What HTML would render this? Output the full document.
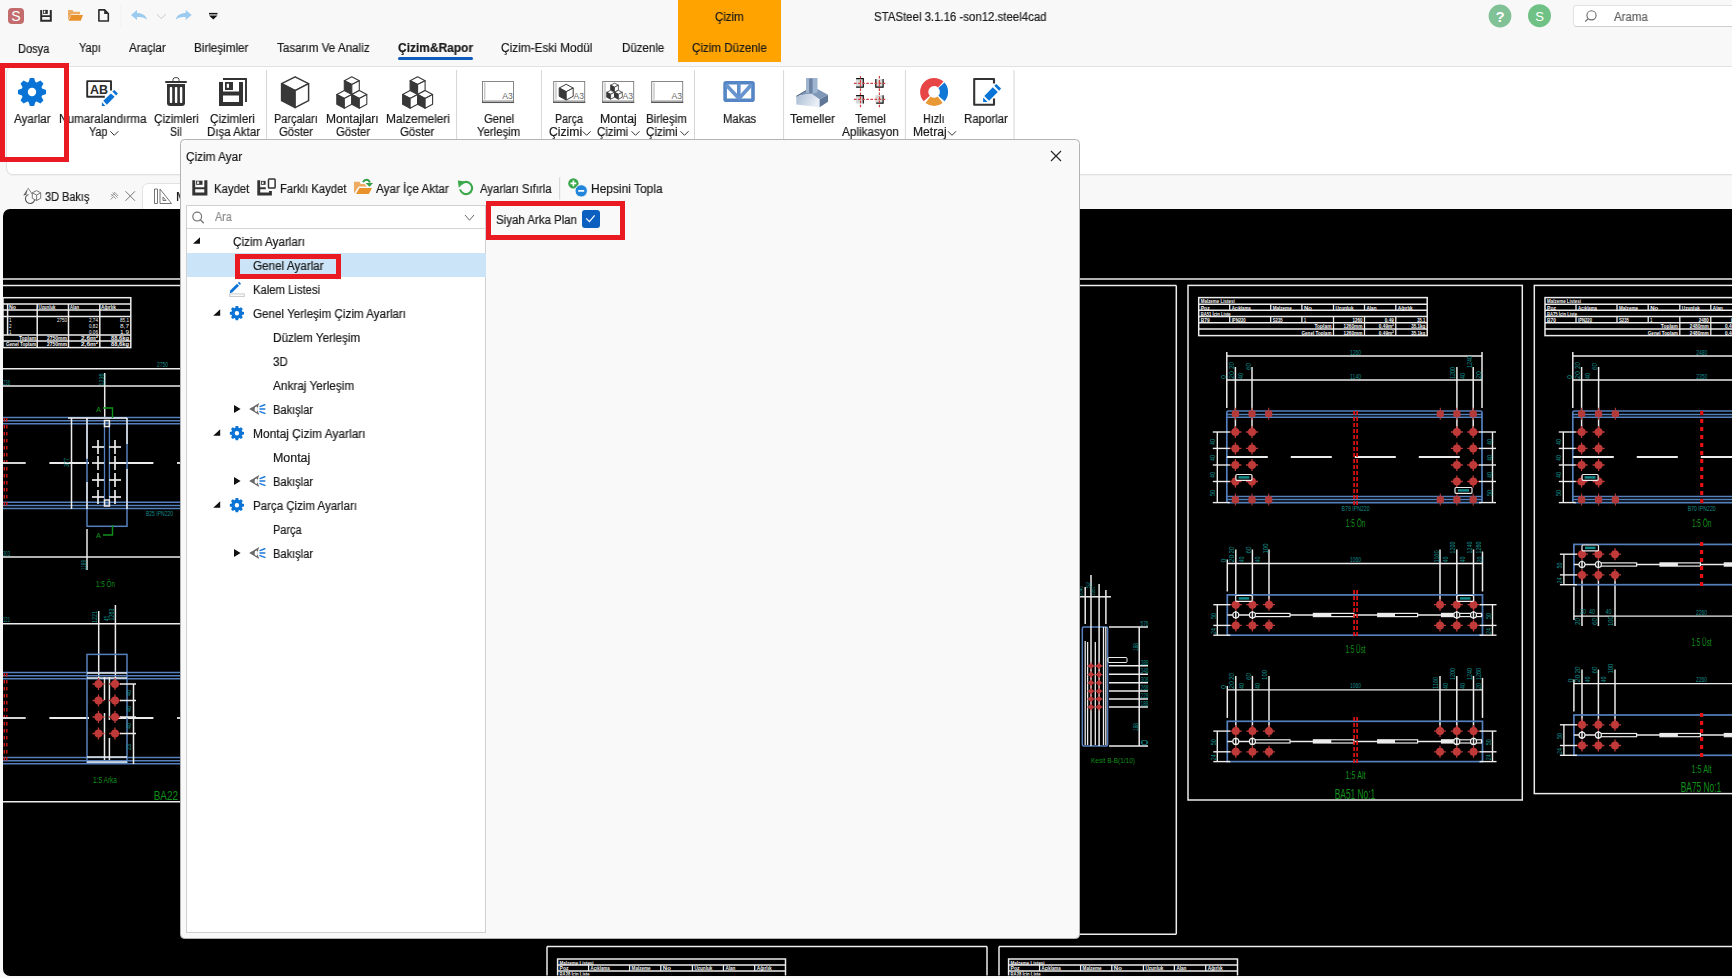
<!DOCTYPE html>
<html><head><meta charset="utf-8"><title>STASteel</title>
<style>
html,body{margin:0;padding:0;}
body{width:1732px;height:978px;overflow:hidden;position:relative;background:#f8f8f8;font-family:"Liberation Sans", sans-serif;}
.a{position:absolute;}
.t{position:absolute;white-space:pre;line-height:1;transform-origin:0 0;font-family:"Liberation Sans", sans-serif;will-change:transform;-webkit-text-stroke:0.2px currentColor;}
svg{position:absolute;overflow:visible;}
</style></head><body>

<div class="a" style="left:678px;top:0;width:103px;height:61.5px;background:#ffa300"></div>
<div class="a" style="left:398px;top:57.3px;width:75px;height:2.6px;background:#0f5cbf;border-radius:2px"></div>
<div class="a" style="left:6px;top:66px;width:1760px;height:107px;background:#fff;border:1px solid #e2e2e2;border-radius:7px;box-shadow:0 1px 1px rgba(0,0,0,0.04)"></div>
<div class="a" style="left:141.8px;top:182.8px;width:120px;height:30px;background:#fff;border:1px solid #e3e3e3;border-radius:6px 6px 0 0"></div>
<div class="a" style="left:1572.8px;top:4.7px;width:200px;height:21.9px;background:#fff;border:1px solid #e3e3e3;border-bottom-color:#cfcfcf;border-radius:4px;box-sizing:border-box"></div>

<div class="a" style="left:3px;top:209px;width:1760px;height:766.5px;background:#000;border-radius:7px"></div>
<svg class="a" style="left:0;top:0" width="1732" height="978" viewBox="0 0 1732 978">
<defs><clipPath id="cadclip"><rect x="3" y="209" width="1729" height="766.5"/></clipPath></defs><g clip-path="url(#cadclip)">
<line x1="3.00" y1="279.00" x2="1732.00" y2="279.00" stroke="#ececec" stroke-width="1.6" />
<line x1="3.00" y1="285.50" x2="1176.30" y2="285.50" stroke="#ececec" stroke-width="1.5" />
<rect x="3.00" y="297.70" width="127.80" height="49.90" rx="0" fill="none" stroke="#ececec" stroke-width="1.5"/>
<line x1="3.00" y1="304.00" x2="130.80" y2="304.00" stroke="#ececec" stroke-width="1.5" />
<line x1="3.00" y1="310.00" x2="130.80" y2="310.00" stroke="#ececec" stroke-width="1.5" />
<line x1="3.00" y1="316.60" x2="130.80" y2="316.60" stroke="#ececec" stroke-width="1.5" />
<line x1="3.00" y1="335.00" x2="130.80" y2="335.00" stroke="#ececec" stroke-width="1.5" />
<line x1="3.00" y1="341.00" x2="130.80" y2="341.00" stroke="#ececec" stroke-width="1.5" />
<line x1="37.20" y1="304.00" x2="37.20" y2="347.60" stroke="#ececec" stroke-width="1.5" />
<line x1="68.50" y1="304.00" x2="68.50" y2="347.60" stroke="#ececec" stroke-width="1.5" />
<line x1="99.80" y1="304.00" x2="99.80" y2="347.60" stroke="#ececec" stroke-width="1.5" />
<line x1="7.60" y1="304.00" x2="7.60" y2="335.00" stroke="#ececec" stroke-width="1.5" />
<text x="9.00" y="309.20" font-family="Liberation Sans" font-size="6" fill="#f4f4f4" text-anchor="start" font-weight="700" textLength="7" lengthAdjust="spacingAndGlyphs">No</text>
<text x="38.50" y="309.20" font-family="Liberation Sans" font-size="6" fill="#f4f4f4" text-anchor="start" font-weight="700" textLength="17" lengthAdjust="spacingAndGlyphs">Uzunluk</text>
<text x="70.00" y="309.20" font-family="Liberation Sans" font-size="6" fill="#f4f4f4" text-anchor="start" font-weight="700" textLength="9" lengthAdjust="spacingAndGlyphs">Alan</text>
<text x="101.00" y="309.20" font-family="Liberation Sans" font-size="6" fill="#f4f4f4" text-anchor="start" font-weight="700" textLength="15" lengthAdjust="spacingAndGlyphs">Ağırlık</text>
<text x="9.00" y="321.50" font-family="Liberation Sans" font-size="5.5" fill="#f4f4f4" text-anchor="start" textLength="2.5" lengthAdjust="spacingAndGlyphs">1</text>
<text x="98.00" y="321.50" font-family="Liberation Sans" font-size="5.5" fill="#f4f4f4" text-anchor="end" textLength="9" lengthAdjust="spacingAndGlyphs">2,74</text>
<text x="129.00" y="321.50" font-family="Liberation Sans" font-size="5.5" fill="#f4f4f4" text-anchor="end" textLength="9" lengthAdjust="spacingAndGlyphs">85,1</text>
<text x="9.00" y="327.50" font-family="Liberation Sans" font-size="5.5" fill="#f4f4f4" text-anchor="start" textLength="2.5" lengthAdjust="spacingAndGlyphs">2</text>
<text x="98.00" y="327.50" font-family="Liberation Sans" font-size="5.5" fill="#f4f4f4" text-anchor="end" textLength="9" lengthAdjust="spacingAndGlyphs">0,82</text>
<text x="129.00" y="327.50" font-family="Liberation Sans" font-size="5.5" fill="#f4f4f4" text-anchor="end" textLength="9" lengthAdjust="spacingAndGlyphs">8,7</text>
<text x="9.00" y="333.50" font-family="Liberation Sans" font-size="5.5" fill="#f4f4f4" text-anchor="start" textLength="2.5" lengthAdjust="spacingAndGlyphs">1</text>
<text x="98.00" y="333.50" font-family="Liberation Sans" font-size="5.5" fill="#f4f4f4" text-anchor="end" textLength="9" lengthAdjust="spacingAndGlyphs">0,06</text>
<text x="129.00" y="333.50" font-family="Liberation Sans" font-size="5.5" fill="#f4f4f4" text-anchor="end" textLength="9" lengthAdjust="spacingAndGlyphs">1,9</text>
<text x="67.00" y="321.50" font-family="Liberation Sans" font-size="5.5" fill="#f4f4f4" text-anchor="end" textLength="10" lengthAdjust="spacingAndGlyphs">2750</text>
<text x="36.00" y="340.20" font-family="Liberation Sans" font-size="6" fill="#f4f4f4" text-anchor="end" font-weight="700" textLength="17" lengthAdjust="spacingAndGlyphs">Toplam</text>
<text x="36.00" y="346.40" font-family="Liberation Sans" font-size="6" fill="#f4f4f4" text-anchor="end" font-weight="700" textLength="30" lengthAdjust="spacingAndGlyphs">Genel Toplam</text>
<text x="67.00" y="340.20" font-family="Liberation Sans" font-size="5.5" fill="#f4f4f4" text-anchor="end" font-weight="700" textLength="20" lengthAdjust="spacingAndGlyphs">2750mm</text>
<text x="98.00" y="340.20" font-family="Liberation Sans" font-size="5.5" fill="#f4f4f4" text-anchor="end" font-weight="700" textLength="17" lengthAdjust="spacingAndGlyphs">2,6m²</text>
<text x="129.00" y="340.20" font-family="Liberation Sans" font-size="5.5" fill="#f4f4f4" text-anchor="end" font-weight="700" textLength="18" lengthAdjust="spacingAndGlyphs">88,6kg</text>
<text x="67.00" y="346.40" font-family="Liberation Sans" font-size="5.5" fill="#f4f4f4" text-anchor="end" font-weight="700" textLength="20" lengthAdjust="spacingAndGlyphs">2750mm</text>
<text x="98.00" y="346.40" font-family="Liberation Sans" font-size="5.5" fill="#f4f4f4" text-anchor="end" font-weight="700" textLength="17" lengthAdjust="spacingAndGlyphs">2,6m²</text>
<text x="129.00" y="346.40" font-family="Liberation Sans" font-size="5.5" fill="#f4f4f4" text-anchor="end" font-weight="700" textLength="18" lengthAdjust="spacingAndGlyphs">88,6kg</text>
<line x1="3.00" y1="368.70" x2="180.00" y2="368.70" stroke="#ececec" stroke-width="1.5" />
<text x="157.00" y="367.30" font-family="Liberation Sans" font-size="7" fill="#138c8c" text-anchor="start" textLength="11" lengthAdjust="spacingAndGlyphs">2750</text>
<line x1="3.00" y1="386.00" x2="180.00" y2="386.00" stroke="#ececec" stroke-width="1.5" />
<text x="3.00" y="385.00" font-family="Liberation Sans" font-size="7" fill="#138c8c" text-anchor="start" textLength="7" lengthAdjust="spacingAndGlyphs">236</text>
<line x1="104.70" y1="373.00" x2="104.70" y2="418.00" stroke="#ececec" stroke-width="1.5" />
<text x="103.50" y="385.50" font-family="Liberation Sans" font-size="6.5" fill="#138c8c" text-anchor="start" transform="rotate(-90 103.50 385.50)" textLength="12" lengthAdjust="spacingAndGlyphs">1236</text>
<line x1="3.00" y1="417.50" x2="180.00" y2="417.50" stroke="#5580bd" stroke-width="1.5" />
<line x1="3.00" y1="420.70" x2="180.00" y2="420.70" stroke="#5580bd" stroke-width="1.5" />
<line x1="3.00" y1="423.70" x2="180.00" y2="423.70" stroke="#5580bd" stroke-width="1.5" />
<line x1="3.00" y1="502.20" x2="180.00" y2="502.20" stroke="#5580bd" stroke-width="1.5" />
<line x1="3.00" y1="505.50" x2="180.00" y2="505.50" stroke="#5580bd" stroke-width="1.5" />
<line x1="3.00" y1="508.50" x2="180.00" y2="508.50" stroke="#5580bd" stroke-width="1.5" />
<line x1="4.30" y1="418.00" x2="4.30" y2="421.50" stroke="#e01818" stroke-width="1.3" />
<line x1="6.80" y1="418.00" x2="6.80" y2="421.50" stroke="#e01818" stroke-width="1.3" />
<line x1="4.30" y1="425.00" x2="4.30" y2="428.50" stroke="#e01818" stroke-width="1.3" />
<line x1="6.80" y1="425.00" x2="6.80" y2="428.50" stroke="#e01818" stroke-width="1.3" />
<line x1="4.30" y1="432.00" x2="4.30" y2="435.50" stroke="#e01818" stroke-width="1.3" />
<line x1="6.80" y1="432.00" x2="6.80" y2="435.50" stroke="#e01818" stroke-width="1.3" />
<line x1="4.30" y1="439.00" x2="4.30" y2="442.50" stroke="#e01818" stroke-width="1.3" />
<line x1="6.80" y1="439.00" x2="6.80" y2="442.50" stroke="#e01818" stroke-width="1.3" />
<line x1="4.30" y1="446.00" x2="4.30" y2="449.50" stroke="#e01818" stroke-width="1.3" />
<line x1="6.80" y1="446.00" x2="6.80" y2="449.50" stroke="#e01818" stroke-width="1.3" />
<line x1="4.30" y1="453.00" x2="4.30" y2="456.50" stroke="#e01818" stroke-width="1.3" />
<line x1="6.80" y1="453.00" x2="6.80" y2="456.50" stroke="#e01818" stroke-width="1.3" />
<line x1="4.30" y1="460.00" x2="4.30" y2="463.50" stroke="#e01818" stroke-width="1.3" />
<line x1="6.80" y1="460.00" x2="6.80" y2="463.50" stroke="#e01818" stroke-width="1.3" />
<line x1="4.30" y1="467.00" x2="4.30" y2="470.50" stroke="#e01818" stroke-width="1.3" />
<line x1="6.80" y1="467.00" x2="6.80" y2="470.50" stroke="#e01818" stroke-width="1.3" />
<line x1="4.30" y1="474.00" x2="4.30" y2="477.50" stroke="#e01818" stroke-width="1.3" />
<line x1="6.80" y1="474.00" x2="6.80" y2="477.50" stroke="#e01818" stroke-width="1.3" />
<line x1="4.30" y1="481.00" x2="4.30" y2="484.50" stroke="#e01818" stroke-width="1.3" />
<line x1="6.80" y1="481.00" x2="6.80" y2="484.50" stroke="#e01818" stroke-width="1.3" />
<line x1="4.30" y1="488.00" x2="4.30" y2="491.50" stroke="#e01818" stroke-width="1.3" />
<line x1="6.80" y1="488.00" x2="6.80" y2="491.50" stroke="#e01818" stroke-width="1.3" />
<line x1="4.30" y1="495.00" x2="4.30" y2="498.50" stroke="#e01818" stroke-width="1.3" />
<line x1="6.80" y1="495.00" x2="6.80" y2="498.50" stroke="#e01818" stroke-width="1.3" />
<line x1="4.30" y1="502.00" x2="4.30" y2="505.50" stroke="#e01818" stroke-width="1.3" />
<line x1="6.80" y1="502.00" x2="6.80" y2="505.50" stroke="#e01818" stroke-width="1.3" />
<line x1="3.00" y1="463.00" x2="25.70" y2="463.00" stroke="#ececec" stroke-width="1.8" />
<line x1="49.40" y1="463.00" x2="89.00" y2="463.00" stroke="#ececec" stroke-width="1.8" />
<line x1="116.00" y1="463.00" x2="153.40" y2="463.00" stroke="#ececec" stroke-width="1.8" />
<line x1="177.00" y1="463.00" x2="180.00" y2="463.00" stroke="#ececec" stroke-width="1.8" />
<line x1="71.50" y1="418.00" x2="71.50" y2="509.00" stroke="#ececec" stroke-width="1.5" />
<rect x="87.00" y="418.00" width="40.00" height="108.30" rx="0" fill="none" stroke="#5580bd" stroke-width="1.5"/>
<line x1="68.00" y1="418.00" x2="127.00" y2="418.00" stroke="#ececec" stroke-width="1.5" />
<line x1="87.00" y1="418.00" x2="87.00" y2="458.70" stroke="#ececec" stroke-width="1.5" />
<line x1="87.00" y1="482.00" x2="87.00" y2="509.00" stroke="#ececec" stroke-width="1.5" />
<line x1="127.00" y1="418.00" x2="127.00" y2="444.00" stroke="#ececec" stroke-width="1.5" />
<line x1="127.00" y1="469.00" x2="127.00" y2="509.00" stroke="#ececec" stroke-width="1.5" />
<rect x="104.50" y="423.00" width="4.90" height="81.00" rx="0" fill="none" stroke="#5580bd" stroke-width="1.3"/>
<rect x="104.50" y="420.50" width="4.90" height="6.00" rx="0" fill="none" stroke="#ececec" stroke-width="1.5"/>
<rect x="104.50" y="500.00" width="4.90" height="6.00" rx="0" fill="none" stroke="#ececec" stroke-width="1.5"/>
<line x1="92.00" y1="447.00" x2="104.00" y2="447.00" stroke="#ececec" stroke-width="1.7" />
<line x1="98.00" y1="440.00" x2="98.00" y2="454.00" stroke="#ececec" stroke-width="1.7" />
<line x1="109.00" y1="447.00" x2="121.00" y2="447.00" stroke="#ececec" stroke-width="1.7" />
<line x1="115.00" y1="440.00" x2="115.00" y2="454.00" stroke="#ececec" stroke-width="1.7" />
<line x1="92.00" y1="463.00" x2="104.00" y2="463.00" stroke="#ececec" stroke-width="1.7" />
<line x1="98.00" y1="456.00" x2="98.00" y2="470.00" stroke="#ececec" stroke-width="1.7" />
<line x1="109.00" y1="463.00" x2="121.00" y2="463.00" stroke="#ececec" stroke-width="1.7" />
<line x1="115.00" y1="456.00" x2="115.00" y2="470.00" stroke="#ececec" stroke-width="1.7" />
<line x1="92.00" y1="480.00" x2="104.00" y2="480.00" stroke="#ececec" stroke-width="1.7" />
<line x1="98.00" y1="473.00" x2="98.00" y2="487.00" stroke="#ececec" stroke-width="1.7" />
<line x1="109.00" y1="480.00" x2="121.00" y2="480.00" stroke="#ececec" stroke-width="1.7" />
<line x1="115.00" y1="473.00" x2="115.00" y2="487.00" stroke="#ececec" stroke-width="1.7" />
<line x1="92.00" y1="497.00" x2="104.00" y2="497.00" stroke="#ececec" stroke-width="1.7" />
<line x1="98.00" y1="490.00" x2="98.00" y2="504.00" stroke="#ececec" stroke-width="1.7" />
<line x1="109.00" y1="497.00" x2="121.00" y2="497.00" stroke="#ececec" stroke-width="1.7" />
<line x1="115.00" y1="490.00" x2="115.00" y2="504.00" stroke="#ececec" stroke-width="1.7" />
<text x="96.00" y="412.00" font-family="Liberation Sans" font-size="7.5" fill="#12901c" text-anchor="start" textLength="5" lengthAdjust="spacingAndGlyphs">A</text>
<path d="M103,408 H112.5 V418" fill="none" stroke="#12901c" stroke-width="1.4"/>
<text x="96.00" y="538.00" font-family="Liberation Sans" font-size="7.5" fill="#12901c" text-anchor="start" textLength="5" lengthAdjust="spacingAndGlyphs">A</text>
<path d="M103,535 H112.5 V525" fill="none" stroke="#12901c" stroke-width="1.4"/>
<text x="146.00" y="516.00" font-family="Liberation Sans" font-size="7" fill="#138c8c" text-anchor="start" textLength="27" lengthAdjust="spacingAndGlyphs">B25 IPN220</text>
<text x="68.50" y="467.00" font-family="Liberation Sans" font-size="6.5" fill="#138c8c" text-anchor="start" transform="rotate(-90 68.50 467.00)" textLength="9" lengthAdjust="spacingAndGlyphs">377</text>
<line x1="3.00" y1="557.00" x2="180.00" y2="557.00" stroke="#ececec" stroke-width="1.4" />
<text x="3.00" y="556.00" font-family="Liberation Sans" font-size="7" fill="#138c8c" text-anchor="start" textLength="7" lengthAdjust="spacingAndGlyphs">303</text>
<line x1="87.00" y1="529.00" x2="87.00" y2="570.00" stroke="#ececec" stroke-width="1.5" />
<text x="85.50" y="570.00" font-family="Liberation Sans" font-size="6.5" fill="#138c8c" text-anchor="start" transform="rotate(-90 85.50 570.00)" textLength="10" lengthAdjust="spacingAndGlyphs">1189</text>
<text x="96.00" y="587.00" font-family="Liberation Sans" font-size="9" fill="#12901c" text-anchor="start" textLength="19" lengthAdjust="spacingAndGlyphs">1:5 Ön</text>
<line x1="3.00" y1="623.70" x2="180.00" y2="623.70" stroke="#ececec" stroke-width="1.4" />
<text x="3.00" y="622.00" font-family="Liberation Sans" font-size="7" fill="#138c8c" text-anchor="start" textLength="7" lengthAdjust="spacingAndGlyphs">121</text>
<line x1="98.70" y1="611.00" x2="98.70" y2="684.00" stroke="#ececec" stroke-width="1.5" />
<line x1="115.40" y1="605.00" x2="115.40" y2="684.00" stroke="#ececec" stroke-width="1.5" />
<text x="97.00" y="623.00" font-family="Liberation Sans" font-size="6.5" fill="#138c8c" text-anchor="start" transform="rotate(-90 97.00 623.00)" textLength="12" lengthAdjust="spacingAndGlyphs">1221</text>
<text x="108.50" y="621.00" font-family="Liberation Sans" font-size="6.5" fill="#138c8c" text-anchor="start" transform="rotate(-90 108.50 621.00)" textLength="5" lengthAdjust="spacingAndGlyphs">45</text>
<text x="113.70" y="620.50" font-family="Liberation Sans" font-size="6.5" fill="#138c8c" text-anchor="start" transform="rotate(-90 113.70 620.50)" textLength="12" lengthAdjust="spacingAndGlyphs">1263</text>
<line x1="3.00" y1="672.60" x2="180.00" y2="672.60" stroke="#5580bd" stroke-width="1.5" />
<line x1="3.00" y1="675.80" x2="180.00" y2="675.80" stroke="#5580bd" stroke-width="1.5" />
<line x1="3.00" y1="678.80" x2="180.00" y2="678.80" stroke="#5580bd" stroke-width="1.5" />
<line x1="3.00" y1="757.40" x2="180.00" y2="757.40" stroke="#5580bd" stroke-width="1.5" />
<line x1="3.00" y1="760.70" x2="180.00" y2="760.70" stroke="#5580bd" stroke-width="1.5" />
<line x1="3.00" y1="763.70" x2="180.00" y2="763.70" stroke="#5580bd" stroke-width="1.5" />
<line x1="4.30" y1="673.00" x2="4.30" y2="676.50" stroke="#e01818" stroke-width="1.3" />
<line x1="6.80" y1="673.00" x2="6.80" y2="676.50" stroke="#e01818" stroke-width="1.3" />
<line x1="4.30" y1="680.00" x2="4.30" y2="683.50" stroke="#e01818" stroke-width="1.3" />
<line x1="6.80" y1="680.00" x2="6.80" y2="683.50" stroke="#e01818" stroke-width="1.3" />
<line x1="4.30" y1="687.00" x2="4.30" y2="690.50" stroke="#e01818" stroke-width="1.3" />
<line x1="6.80" y1="687.00" x2="6.80" y2="690.50" stroke="#e01818" stroke-width="1.3" />
<line x1="4.30" y1="694.00" x2="4.30" y2="697.50" stroke="#e01818" stroke-width="1.3" />
<line x1="6.80" y1="694.00" x2="6.80" y2="697.50" stroke="#e01818" stroke-width="1.3" />
<line x1="4.30" y1="701.00" x2="4.30" y2="704.50" stroke="#e01818" stroke-width="1.3" />
<line x1="6.80" y1="701.00" x2="6.80" y2="704.50" stroke="#e01818" stroke-width="1.3" />
<line x1="4.30" y1="708.00" x2="4.30" y2="711.50" stroke="#e01818" stroke-width="1.3" />
<line x1="6.80" y1="708.00" x2="6.80" y2="711.50" stroke="#e01818" stroke-width="1.3" />
<line x1="4.30" y1="715.00" x2="4.30" y2="718.50" stroke="#e01818" stroke-width="1.3" />
<line x1="6.80" y1="715.00" x2="6.80" y2="718.50" stroke="#e01818" stroke-width="1.3" />
<line x1="4.30" y1="722.00" x2="4.30" y2="725.50" stroke="#e01818" stroke-width="1.3" />
<line x1="6.80" y1="722.00" x2="6.80" y2="725.50" stroke="#e01818" stroke-width="1.3" />
<line x1="4.30" y1="729.00" x2="4.30" y2="732.50" stroke="#e01818" stroke-width="1.3" />
<line x1="6.80" y1="729.00" x2="6.80" y2="732.50" stroke="#e01818" stroke-width="1.3" />
<line x1="4.30" y1="736.00" x2="4.30" y2="739.50" stroke="#e01818" stroke-width="1.3" />
<line x1="6.80" y1="736.00" x2="6.80" y2="739.50" stroke="#e01818" stroke-width="1.3" />
<line x1="4.30" y1="743.00" x2="4.30" y2="746.50" stroke="#e01818" stroke-width="1.3" />
<line x1="6.80" y1="743.00" x2="6.80" y2="746.50" stroke="#e01818" stroke-width="1.3" />
<line x1="4.30" y1="750.00" x2="4.30" y2="753.50" stroke="#e01818" stroke-width="1.3" />
<line x1="6.80" y1="750.00" x2="6.80" y2="753.50" stroke="#e01818" stroke-width="1.3" />
<line x1="4.30" y1="757.00" x2="4.30" y2="760.50" stroke="#e01818" stroke-width="1.3" />
<line x1="6.80" y1="757.00" x2="6.80" y2="760.50" stroke="#e01818" stroke-width="1.3" />
<line x1="3.00" y1="718.00" x2="25.70" y2="718.00" stroke="#ececec" stroke-width="1.8" />
<line x1="49.40" y1="718.00" x2="89.00" y2="718.00" stroke="#ececec" stroke-width="1.8" />
<line x1="116.00" y1="718.00" x2="153.40" y2="718.00" stroke="#ececec" stroke-width="1.8" />
<line x1="177.00" y1="718.00" x2="180.00" y2="718.00" stroke="#ececec" stroke-width="1.8" />
<rect x="87.00" y="654.40" width="40.00" height="108.30" rx="0" fill="none" stroke="#5580bd" stroke-width="1.5"/>
<line x1="87.00" y1="673.00" x2="127.00" y2="673.00" stroke="#ececec" stroke-width="1.5" />
<line x1="87.00" y1="678.00" x2="127.00" y2="678.00" stroke="#ececec" stroke-width="1.5" />
<line x1="87.00" y1="757.00" x2="127.00" y2="757.00" stroke="#ececec" stroke-width="1.5" />
<line x1="87.00" y1="762.00" x2="127.00" y2="762.00" stroke="#ececec" stroke-width="1.5" />
<line x1="104.50" y1="677.00" x2="104.50" y2="700.00" stroke="#ececec" stroke-width="1.5" />
<line x1="109.40" y1="677.00" x2="109.40" y2="720.00" stroke="#ececec" stroke-width="1.5" />
<line x1="104.50" y1="713.00" x2="104.50" y2="760.00" stroke="#ececec" stroke-width="1.5" />
<line x1="109.40" y1="738.00" x2="109.40" y2="760.00" stroke="#ececec" stroke-width="1.5" />
<circle cx="98.50" cy="684.00" r="4.0" fill="#c03a3a"/><path d="M92.50,684.00 H104.50 M98.50,678.00 V690.00" stroke="#c03a3a" stroke-width="1.3"/>
<circle cx="115.00" cy="684.00" r="4.0" fill="#c03a3a"/><path d="M109.00,684.00 H121.00 M115.00,678.00 V690.00" stroke="#c03a3a" stroke-width="1.3"/>
<line x1="120.00" y1="684.00" x2="136.00" y2="684.00" stroke="#ececec" stroke-width="1.5" />
<circle cx="98.50" cy="700.50" r="4.0" fill="#c03a3a"/><path d="M92.50,700.50 H104.50 M98.50,694.50 V706.50" stroke="#c03a3a" stroke-width="1.3"/>
<circle cx="115.00" cy="700.50" r="4.0" fill="#c03a3a"/><path d="M109.00,700.50 H121.00 M115.00,694.50 V706.50" stroke="#c03a3a" stroke-width="1.3"/>
<line x1="120.00" y1="700.50" x2="136.00" y2="700.50" stroke="#ececec" stroke-width="1.5" />
<circle cx="98.50" cy="717.00" r="4.0" fill="#c03a3a"/><path d="M92.50,717.00 H104.50 M98.50,711.00 V723.00" stroke="#c03a3a" stroke-width="1.3"/>
<circle cx="115.00" cy="717.00" r="4.0" fill="#c03a3a"/><path d="M109.00,717.00 H121.00 M115.00,711.00 V723.00" stroke="#c03a3a" stroke-width="1.3"/>
<line x1="120.00" y1="717.00" x2="136.00" y2="717.00" stroke="#ececec" stroke-width="1.5" />
<circle cx="98.50" cy="733.50" r="4.0" fill="#c03a3a"/><path d="M92.50,733.50 H104.50 M98.50,727.50 V739.50" stroke="#c03a3a" stroke-width="1.3"/>
<circle cx="115.00" cy="733.50" r="4.0" fill="#c03a3a"/><path d="M109.00,733.50 H121.00 M115.00,727.50 V739.50" stroke="#c03a3a" stroke-width="1.3"/>
<line x1="120.00" y1="733.50" x2="136.00" y2="733.50" stroke="#ececec" stroke-width="1.5" />
<line x1="133.50" y1="684.00" x2="133.50" y2="764.00" stroke="#ececec" stroke-width="1.5" />
<text x="131.00" y="696.00" font-family="Liberation Sans" font-size="6.5" fill="#138c8c" text-anchor="start" transform="rotate(-90 131.00 696.00)" textLength="6" lengthAdjust="spacingAndGlyphs">40</text>
<text x="131.00" y="712.00" font-family="Liberation Sans" font-size="6.5" fill="#138c8c" text-anchor="start" transform="rotate(-90 131.00 712.00)" textLength="6" lengthAdjust="spacingAndGlyphs">40</text>
<text x="131.00" y="729.00" font-family="Liberation Sans" font-size="6.5" fill="#138c8c" text-anchor="start" transform="rotate(-90 131.00 729.00)" textLength="6" lengthAdjust="spacingAndGlyphs">40</text>
<text x="131.00" y="750.00" font-family="Liberation Sans" font-size="6.5" fill="#138c8c" text-anchor="start" transform="rotate(-90 131.00 750.00)" textLength="6" lengthAdjust="spacingAndGlyphs">23</text>
<text x="93.00" y="783.00" font-family="Liberation Sans" font-size="9" fill="#12901c" text-anchor="start" textLength="24" lengthAdjust="spacingAndGlyphs">1:5 Arka</text>
<text x="153.70" y="800.00" font-family="Liberation Sans" font-size="12.5" fill="#12901c" text-anchor="start" textLength="48" lengthAdjust="spacingAndGlyphs">BA22 No:1</text>
<line x1="3.00" y1="801.80" x2="180.00" y2="801.80" stroke="#ececec" stroke-width="1.6" />
<line x1="1176.30" y1="285.50" x2="1176.30" y2="934.30" stroke="#ececec" stroke-width="1.5" />
<line x1="1070.00" y1="934.30" x2="1176.30" y2="934.30" stroke="#ececec" stroke-width="1.5" />
<rect x="1082.30" y="627.00" width="25.30" height="119.00" rx="1.5" fill="none" stroke="#5580bd" stroke-width="1.5"/>
<line x1="1080.00" y1="596.80" x2="1111.00" y2="596.80" stroke="#ececec" stroke-width="1.5" />
<line x1="1085.20" y1="587.00" x2="1085.20" y2="624.00" stroke="#ececec" stroke-width="1.5" />
<line x1="1091.00" y1="575.00" x2="1091.00" y2="624.00" stroke="#ececec" stroke-width="1.5" />
<line x1="1099.10" y1="584.00" x2="1099.10" y2="624.00" stroke="#ececec" stroke-width="1.5" />
<line x1="1105.90" y1="590.00" x2="1105.90" y2="624.00" stroke="#ececec" stroke-width="1.5" />
<line x1="1091.00" y1="624.00" x2="1091.00" y2="746.00" stroke="#ececec" stroke-width="1.5" />
<line x1="1099.10" y1="624.00" x2="1099.10" y2="746.00" stroke="#ececec" stroke-width="1.5" />
<line x1="1085.20" y1="641.00" x2="1085.20" y2="745.00" stroke="#ececec" stroke-width="1.3" />
<line x1="1087.60" y1="642.00" x2="1087.60" y2="745.00" stroke="#ececec" stroke-width="1.3" />
<line x1="1095.30" y1="642.00" x2="1095.30" y2="745.00" stroke="#ececec" stroke-width="1.3" />
<line x1="1103.50" y1="627.00" x2="1103.50" y2="745.00" stroke="#ececec" stroke-width="1.3" />
<line x1="1105.80" y1="627.00" x2="1105.80" y2="745.00" stroke="#ececec" stroke-width="1.3" />
<line x1="1109.00" y1="627.00" x2="1148.00" y2="627.00" stroke="#ececec" stroke-width="1.5" />
<line x1="1109.00" y1="665.80" x2="1148.00" y2="665.80" stroke="#ececec" stroke-width="1.5" />
<line x1="1109.00" y1="674.20" x2="1148.00" y2="674.20" stroke="#ececec" stroke-width="1.5" />
<line x1="1109.00" y1="682.70" x2="1148.00" y2="682.70" stroke="#ececec" stroke-width="1.5" />
<line x1="1109.00" y1="691.00" x2="1148.00" y2="691.00" stroke="#ececec" stroke-width="1.5" />
<line x1="1109.00" y1="699.00" x2="1148.00" y2="699.00" stroke="#ececec" stroke-width="1.5" />
<line x1="1109.00" y1="707.00" x2="1148.00" y2="707.00" stroke="#ececec" stroke-width="1.5" />
<line x1="1109.00" y1="746.00" x2="1148.00" y2="746.00" stroke="#ececec" stroke-width="1.5" />
<line x1="1139.20" y1="627.00" x2="1139.20" y2="746.00" stroke="#ececec" stroke-width="1.5" />
<circle cx="1091.00" cy="666.00" r="2.3" fill="#c03a3a"/><path d="M1087.40,666.00 H1094.60 M1091.00,662.40 V669.60" stroke="#c03a3a" stroke-width="1.3"/>
<circle cx="1099.00" cy="666.00" r="2.3" fill="#c03a3a"/><path d="M1095.40,666.00 H1102.60 M1099.00,662.40 V669.60" stroke="#c03a3a" stroke-width="1.3"/>
<circle cx="1091.00" cy="674.60" r="2.3" fill="#c03a3a"/><path d="M1087.40,674.60 H1094.60 M1091.00,671.00 V678.20" stroke="#c03a3a" stroke-width="1.3"/>
<circle cx="1099.00" cy="674.60" r="2.3" fill="#c03a3a"/><path d="M1095.40,674.60 H1102.60 M1099.00,671.00 V678.20" stroke="#c03a3a" stroke-width="1.3"/>
<circle cx="1091.00" cy="682.80" r="2.3" fill="#c03a3a"/><path d="M1087.40,682.80 H1094.60 M1091.00,679.20 V686.40" stroke="#c03a3a" stroke-width="1.3"/>
<circle cx="1099.00" cy="682.80" r="2.3" fill="#c03a3a"/><path d="M1095.40,682.80 H1102.60 M1099.00,679.20 V686.40" stroke="#c03a3a" stroke-width="1.3"/>
<circle cx="1091.00" cy="691.20" r="2.3" fill="#c03a3a"/><path d="M1087.40,691.20 H1094.60 M1091.00,687.60 V694.80" stroke="#c03a3a" stroke-width="1.3"/>
<circle cx="1099.00" cy="691.20" r="2.3" fill="#c03a3a"/><path d="M1095.40,691.20 H1102.60 M1099.00,687.60 V694.80" stroke="#c03a3a" stroke-width="1.3"/>
<circle cx="1091.00" cy="699.00" r="2.3" fill="#c03a3a"/><path d="M1087.40,699.00 H1094.60 M1091.00,695.40 V702.60" stroke="#c03a3a" stroke-width="1.3"/>
<circle cx="1099.00" cy="699.00" r="2.3" fill="#c03a3a"/><path d="M1095.40,699.00 H1102.60 M1099.00,695.40 V702.60" stroke="#c03a3a" stroke-width="1.3"/>
<circle cx="1091.00" cy="707.00" r="2.3" fill="#c03a3a"/><path d="M1087.40,707.00 H1094.60 M1091.00,703.40 V710.60" stroke="#c03a3a" stroke-width="1.3"/>
<circle cx="1099.00" cy="707.00" r="2.3" fill="#c03a3a"/><path d="M1095.40,707.00 H1102.60 M1099.00,703.40 V710.60" stroke="#c03a3a" stroke-width="1.3"/>
<rect x="1108" y="657.5" width="19" height="5" rx="1" fill="none" stroke="#ececec" stroke-width="1"/>
<text x="1140.50" y="665.00" font-family="Liberation Sans" font-size="6.5" fill="#138c8c" text-anchor="start" textLength="8" lengthAdjust="spacingAndGlyphs">388</text>
<text x="1140.50" y="673.00" font-family="Liberation Sans" font-size="6.5" fill="#138c8c" text-anchor="start" textLength="8" lengthAdjust="spacingAndGlyphs">348</text>
<text x="1140.50" y="681.50" font-family="Liberation Sans" font-size="6.5" fill="#138c8c" text-anchor="start" textLength="8" lengthAdjust="spacingAndGlyphs">308</text>
<text x="1140.50" y="690.00" font-family="Liberation Sans" font-size="6.5" fill="#138c8c" text-anchor="start" textLength="8" lengthAdjust="spacingAndGlyphs">268</text>
<text x="1140.50" y="698.00" font-family="Liberation Sans" font-size="6.5" fill="#138c8c" text-anchor="start" textLength="8" lengthAdjust="spacingAndGlyphs">228</text>
<text x="1140.50" y="706.00" font-family="Liberation Sans" font-size="6.5" fill="#138c8c" text-anchor="start" textLength="8" lengthAdjust="spacingAndGlyphs">188</text>
<text x="1140.50" y="626.00" font-family="Liberation Sans" font-size="6.5" fill="#138c8c" text-anchor="start" textLength="8" lengthAdjust="spacingAndGlyphs">576</text>
<text x="1140.50" y="745.00" font-family="Liberation Sans" font-size="6.5" fill="#138c8c" text-anchor="start" textLength="8" lengthAdjust="spacingAndGlyphs">0</text>
<text x="1137.50" y="651.00" font-family="Liberation Sans" font-size="6.5" fill="#138c8c" text-anchor="start" transform="rotate(-90 1137.50 651.00)" textLength="8" lengthAdjust="spacingAndGlyphs">188</text>
<text x="1137.50" y="731.00" font-family="Liberation Sans" font-size="6.5" fill="#138c8c" text-anchor="start" transform="rotate(-90 1137.50 731.00)" textLength="8" lengthAdjust="spacingAndGlyphs">188</text>
<text x="1091.00" y="763.00" font-family="Liberation Sans" font-size="7.5" fill="#12901c" text-anchor="start" textLength="44" lengthAdjust="spacingAndGlyphs">Kesit B-B(1/10)</text>
<text x="1083.00" y="596.00" font-family="Liberation Sans" font-size="6" fill="#138c8c" text-anchor="start" transform="rotate(-90 1083.00 596.00)" textLength="10" lengthAdjust="spacingAndGlyphs">2040</text>
<text x="1094.50" y="596.00" font-family="Liberation Sans" font-size="6" fill="#138c8c" text-anchor="start" transform="rotate(-90 1094.50 596.00)" textLength="10" lengthAdjust="spacingAndGlyphs">1957</text>
<text x="1090.00" y="588.00" font-family="Liberation Sans" font-size="6" fill="#138c8c" text-anchor="start" transform="rotate(-90 1090.00 588.00)" textLength="6" lengthAdjust="spacingAndGlyphs">52</text>
<rect x="1188.00" y="285.40" width="334.30" height="514.60" rx="0" fill="none" stroke="#ececec" stroke-width="1.5"/>
<rect x="1198.70" y="297.60" width="228.50" height="38.00" rx="0" fill="none" stroke="#ececec" stroke-width="1.5"/>
<line x1="1198.70" y1="304.20" x2="1427.20" y2="304.20" stroke="#ececec" stroke-width="1.5" />
<line x1="1198.70" y1="310.30" x2="1427.20" y2="310.30" stroke="#ececec" stroke-width="1.5" />
<line x1="1198.70" y1="316.50" x2="1427.20" y2="316.50" stroke="#ececec" stroke-width="1.5" />
<line x1="1198.70" y1="322.80" x2="1427.20" y2="322.80" stroke="#ececec" stroke-width="1.5" />
<line x1="1198.70" y1="329.10" x2="1427.20" y2="329.10" stroke="#ececec" stroke-width="1.5" />
<line x1="1229.70" y1="304.20" x2="1229.70" y2="310.30" stroke="#ececec" stroke-width="1.3" />
<line x1="1229.70" y1="316.50" x2="1229.70" y2="322.80" stroke="#ececec" stroke-width="1.3" />
<line x1="1270.70" y1="304.20" x2="1270.70" y2="310.30" stroke="#ececec" stroke-width="1.3" />
<line x1="1270.70" y1="316.50" x2="1270.70" y2="322.80" stroke="#ececec" stroke-width="1.3" />
<line x1="1301.90" y1="304.20" x2="1301.90" y2="310.30" stroke="#ececec" stroke-width="1.3" />
<line x1="1301.90" y1="316.50" x2="1301.90" y2="322.80" stroke="#ececec" stroke-width="1.3" />
<line x1="1333.50" y1="304.20" x2="1333.50" y2="310.30" stroke="#ececec" stroke-width="1.3" />
<line x1="1333.50" y1="316.50" x2="1333.50" y2="322.80" stroke="#ececec" stroke-width="1.3" />
<line x1="1364.50" y1="304.20" x2="1364.50" y2="310.30" stroke="#ececec" stroke-width="1.3" />
<line x1="1364.50" y1="316.50" x2="1364.50" y2="322.80" stroke="#ececec" stroke-width="1.3" />
<line x1="1395.80" y1="304.20" x2="1395.80" y2="310.30" stroke="#ececec" stroke-width="1.3" />
<line x1="1395.80" y1="316.50" x2="1395.80" y2="322.80" stroke="#ececec" stroke-width="1.3" />
<line x1="1333.50" y1="322.80" x2="1333.50" y2="335.60" stroke="#ececec" stroke-width="1.3" />
<line x1="1364.50" y1="322.80" x2="1364.50" y2="335.60" stroke="#ececec" stroke-width="1.3" />
<line x1="1395.80" y1="322.80" x2="1395.80" y2="335.60" stroke="#ececec" stroke-width="1.3" />
<text x="1200.70" y="303.20" font-family="Liberation Sans" font-size="6" fill="#f4f4f4" text-anchor="start" font-weight="700" textLength="34" lengthAdjust="spacingAndGlyphs">Malzeme Listesi</text>
<text x="1200.70" y="309.50" font-family="Liberation Sans" font-size="6" fill="#f4f4f4" text-anchor="start" font-weight="700" textLength="9" lengthAdjust="spacingAndGlyphs">Poz</text>
<text x="1231.70" y="309.50" font-family="Liberation Sans" font-size="6" fill="#f4f4f4" text-anchor="start" font-weight="700" textLength="19" lengthAdjust="spacingAndGlyphs">Açıklama</text>
<text x="1272.70" y="309.50" font-family="Liberation Sans" font-size="6" fill="#f4f4f4" text-anchor="start" font-weight="700" textLength="19" lengthAdjust="spacingAndGlyphs">Malzeme</text>
<text x="1303.90" y="309.50" font-family="Liberation Sans" font-size="6" fill="#f4f4f4" text-anchor="start" font-weight="700" textLength="8" lengthAdjust="spacingAndGlyphs">No</text>
<text x="1335.50" y="309.50" font-family="Liberation Sans" font-size="6" fill="#f4f4f4" text-anchor="start" font-weight="700" textLength="18" lengthAdjust="spacingAndGlyphs">Uzunluk</text>
<text x="1366.50" y="309.50" font-family="Liberation Sans" font-size="6" fill="#f4f4f4" text-anchor="start" font-weight="700" textLength="10" lengthAdjust="spacingAndGlyphs">Alan</text>
<text x="1397.80" y="309.50" font-family="Liberation Sans" font-size="6" fill="#f4f4f4" text-anchor="start" font-weight="700" textLength="15" lengthAdjust="spacingAndGlyphs">Ağırlık</text>
<text x="1200.70" y="315.70" font-family="Liberation Sans" font-size="6" fill="#f4f4f4" text-anchor="start" font-weight="700" textLength="30" lengthAdjust="spacingAndGlyphs">BA51 İçin Liste</text>
<text x="1200.70" y="321.90" font-family="Liberation Sans" font-size="6" fill="#f4f4f4" text-anchor="start" font-weight="700" textLength="9" lengthAdjust="spacingAndGlyphs">B79</text>
<text x="1231.70" y="321.90" font-family="Liberation Sans" font-size="6" fill="#f4f4f4" text-anchor="start" font-weight="700" textLength="14" lengthAdjust="spacingAndGlyphs">IPN220</text>
<text x="1272.70" y="321.90" font-family="Liberation Sans" font-size="6" fill="#f4f4f4" text-anchor="start" font-weight="700" textLength="10" lengthAdjust="spacingAndGlyphs">S235</text>
<text x="1303.90" y="321.90" font-family="Liberation Sans" font-size="6" fill="#f4f4f4" text-anchor="start" font-weight="700" textLength="2" lengthAdjust="spacingAndGlyphs">1</text>
<text x="1362.50" y="321.90" font-family="Liberation Sans" font-size="6" fill="#f4f4f4" text-anchor="end" font-weight="700" textLength="10" lengthAdjust="spacingAndGlyphs">1260</text>
<text x="1393.80" y="321.90" font-family="Liberation Sans" font-size="6" fill="#f4f4f4" text-anchor="end" font-weight="700" textLength="9" lengthAdjust="spacingAndGlyphs">0,49</text>
<text x="1425.30" y="321.90" font-family="Liberation Sans" font-size="6" fill="#f4f4f4" text-anchor="end" font-weight="700" textLength="8" lengthAdjust="spacingAndGlyphs">35,1</text>
<text x="1331.50" y="328.30" font-family="Liberation Sans" font-size="6" fill="#f4f4f4" text-anchor="end" font-weight="700" textLength="17" lengthAdjust="spacingAndGlyphs">Toplam</text>
<text x="1331.50" y="334.60" font-family="Liberation Sans" font-size="6" fill="#f4f4f4" text-anchor="end" font-weight="700" textLength="30" lengthAdjust="spacingAndGlyphs">Genel Toplam</text>
<text x="1362.50" y="328.30" font-family="Liberation Sans" font-size="6" fill="#f4f4f4" text-anchor="end" font-weight="700" textLength="19" lengthAdjust="spacingAndGlyphs">1260mm</text>
<text x="1393.80" y="328.30" font-family="Liberation Sans" font-size="6" fill="#f4f4f4" text-anchor="end" font-weight="700" textLength="15" lengthAdjust="spacingAndGlyphs">0,49m²</text>
<text x="1425.30" y="328.30" font-family="Liberation Sans" font-size="6" fill="#f4f4f4" text-anchor="end" font-weight="700" textLength="14" lengthAdjust="spacingAndGlyphs">35,1kg</text>
<text x="1362.50" y="334.60" font-family="Liberation Sans" font-size="6" fill="#f4f4f4" text-anchor="end" font-weight="700" textLength="19" lengthAdjust="spacingAndGlyphs">1260mm</text>
<text x="1393.80" y="334.60" font-family="Liberation Sans" font-size="6" fill="#f4f4f4" text-anchor="end" font-weight="700" textLength="15" lengthAdjust="spacingAndGlyphs">0,49m²</text>
<text x="1425.30" y="334.60" font-family="Liberation Sans" font-size="6" fill="#f4f4f4" text-anchor="end" font-weight="700" textLength="14" lengthAdjust="spacingAndGlyphs">35,1kg</text>
<line x1="1226.80" y1="356.00" x2="1482.00" y2="356.00" stroke="#ececec" stroke-width="1.4" />
<line x1="1226.80" y1="380.00" x2="1482.00" y2="380.00" stroke="#ececec" stroke-width="1.4" />
<line x1="1226.80" y1="352.00" x2="1226.80" y2="408.00" stroke="#ececec" stroke-width="1.5" />
<line x1="1482.00" y1="352.00" x2="1482.00" y2="408.00" stroke="#ececec" stroke-width="1.5" />
<line x1="1235.40" y1="367.00" x2="1235.40" y2="432.00" stroke="#ececec" stroke-width="1.5" />
<line x1="1252.00" y1="367.00" x2="1252.00" y2="432.00" stroke="#ececec" stroke-width="1.5" />
<line x1="1456.90" y1="367.00" x2="1456.90" y2="432.00" stroke="#ececec" stroke-width="1.5" />
<line x1="1473.20" y1="367.00" x2="1473.20" y2="432.00" stroke="#ececec" stroke-width="1.5" />
<text x="1355.60" y="354.50" font-family="Liberation Sans" font-size="7" fill="#138c8c" text-anchor="middle" textLength="11" lengthAdjust="spacingAndGlyphs">1260</text>
<text x="1355.60" y="378.50" font-family="Liberation Sans" font-size="7" fill="#138c8c" text-anchor="middle" textLength="11" lengthAdjust="spacingAndGlyphs">1140</text>
<text x="1225.80" y="379.00" font-family="Liberation Sans" font-size="6.5" fill="#138c8c" text-anchor="start" transform="rotate(-90 1225.80 379.00)" textLength="4" lengthAdjust="spacingAndGlyphs">0</text>
<text x="1233.90" y="379.00" font-family="Liberation Sans" font-size="6.5" fill="#138c8c" text-anchor="start" transform="rotate(-90 1233.90 379.00)" textLength="8" lengthAdjust="spacingAndGlyphs">20</text>
<text x="1233.90" y="369.00" font-family="Liberation Sans" font-size="6.5" fill="#138c8c" text-anchor="start" transform="rotate(-90 1233.90 369.00)" textLength="7" lengthAdjust="spacingAndGlyphs">20</text>
<text x="1243.40" y="379.00" font-family="Liberation Sans" font-size="6.5" fill="#138c8c" text-anchor="start" transform="rotate(-90 1243.40 379.00)" textLength="6" lengthAdjust="spacingAndGlyphs">40</text>
<text x="1250.50" y="370.00" font-family="Liberation Sans" font-size="6.5" fill="#138c8c" text-anchor="start" transform="rotate(-90 1250.50 370.00)" textLength="7" lengthAdjust="spacingAndGlyphs">60</text>
<text x="1455.40" y="379.00" font-family="Liberation Sans" font-size="6.5" fill="#138c8c" text-anchor="start" transform="rotate(-90 1455.40 379.00)" textLength="12" lengthAdjust="spacingAndGlyphs">1200</text>
<text x="1464.90" y="379.00" font-family="Liberation Sans" font-size="6.5" fill="#138c8c" text-anchor="start" transform="rotate(-90 1464.90 379.00)" textLength="6" lengthAdjust="spacingAndGlyphs">40</text>
<text x="1471.70" y="368.00" font-family="Liberation Sans" font-size="6.5" fill="#138c8c" text-anchor="start" transform="rotate(-90 1471.70 368.00)" textLength="12" lengthAdjust="spacingAndGlyphs">1240</text>
<text x="1481.20" y="379.00" font-family="Liberation Sans" font-size="6.5" fill="#138c8c" text-anchor="start" transform="rotate(-90 1481.20 379.00)" textLength="8" lengthAdjust="spacingAndGlyphs">20</text>
<rect x="1226.8" y="411" width="255.20000000000005" height="91.60000000000002" rx="1.5" fill="none" stroke="#5580bd" stroke-width="1.7"/>
<line x1="1226.80" y1="414.60" x2="1482.00" y2="414.60" stroke="#5580bd" stroke-width="1.5" />
<line x1="1226.80" y1="417.30" x2="1482.00" y2="417.30" stroke="#5580bd" stroke-width="1.5" />
<line x1="1226.80" y1="496.40" x2="1482.00" y2="496.40" stroke="#5580bd" stroke-width="1.5" />
<line x1="1226.80" y1="499.50" x2="1482.00" y2="499.50" stroke="#5580bd" stroke-width="1.5" />
<rect x="1231.80" y="410.50" width="7.2" height="6.6" rx="1.5" fill="#b53a3a"/><line x1="1235.40" y1="407.80" x2="1235.40" y2="419.80" stroke="#b53a3a" stroke-width="1.1"/>
<rect x="1231.80" y="496.30" width="7.2" height="6.6" rx="1.5" fill="#b53a3a"/><line x1="1235.40" y1="493.60" x2="1235.40" y2="505.60" stroke="#b53a3a" stroke-width="1.1"/>
<rect x="1248.40" y="410.50" width="7.2" height="6.6" rx="1.5" fill="#b53a3a"/><line x1="1252.00" y1="407.80" x2="1252.00" y2="419.80" stroke="#b53a3a" stroke-width="1.1"/>
<rect x="1248.40" y="496.30" width="7.2" height="6.6" rx="1.5" fill="#b53a3a"/><line x1="1252.00" y1="493.60" x2="1252.00" y2="505.60" stroke="#b53a3a" stroke-width="1.1"/>
<rect x="1265.10" y="410.50" width="7.2" height="6.6" rx="1.5" fill="#b53a3a"/><line x1="1268.70" y1="407.80" x2="1268.70" y2="419.80" stroke="#b53a3a" stroke-width="1.1"/>
<rect x="1265.10" y="496.30" width="7.2" height="6.6" rx="1.5" fill="#b53a3a"/><line x1="1268.70" y1="493.60" x2="1268.70" y2="505.60" stroke="#b53a3a" stroke-width="1.1"/>
<rect x="1436.70" y="410.50" width="7.2" height="6.6" rx="1.5" fill="#b53a3a"/><line x1="1440.30" y1="407.80" x2="1440.30" y2="419.80" stroke="#b53a3a" stroke-width="1.1"/>
<rect x="1436.70" y="496.30" width="7.2" height="6.6" rx="1.5" fill="#b53a3a"/><line x1="1440.30" y1="493.60" x2="1440.30" y2="505.60" stroke="#b53a3a" stroke-width="1.1"/>
<rect x="1453.30" y="410.50" width="7.2" height="6.6" rx="1.5" fill="#b53a3a"/><line x1="1456.90" y1="407.80" x2="1456.90" y2="419.80" stroke="#b53a3a" stroke-width="1.1"/>
<rect x="1453.30" y="496.30" width="7.2" height="6.6" rx="1.5" fill="#b53a3a"/><line x1="1456.90" y1="493.60" x2="1456.90" y2="505.60" stroke="#b53a3a" stroke-width="1.1"/>
<rect x="1469.60" y="410.50" width="7.2" height="6.6" rx="1.5" fill="#b53a3a"/><line x1="1473.20" y1="407.80" x2="1473.20" y2="419.80" stroke="#b53a3a" stroke-width="1.1"/>
<rect x="1469.60" y="496.30" width="7.2" height="6.6" rx="1.5" fill="#b53a3a"/><line x1="1473.20" y1="493.60" x2="1473.20" y2="505.60" stroke="#b53a3a" stroke-width="1.1"/>
<circle cx="1235.40" cy="432.00" r="4.0" fill="#c03a3a"/><path d="M1229.40,432.00 H1241.40 M1235.40,426.00 V438.00" stroke="#c03a3a" stroke-width="1.3"/>
<circle cx="1235.40" cy="448.40" r="4.0" fill="#c03a3a"/><path d="M1229.40,448.40 H1241.40 M1235.40,442.40 V454.40" stroke="#c03a3a" stroke-width="1.3"/>
<circle cx="1235.40" cy="465.00" r="4.0" fill="#c03a3a"/><path d="M1229.40,465.00 H1241.40 M1235.40,459.00 V471.00" stroke="#c03a3a" stroke-width="1.3"/>
<circle cx="1235.40" cy="481.50" r="4.0" fill="#c03a3a"/><path d="M1229.40,481.50 H1241.40 M1235.40,475.50 V487.50" stroke="#c03a3a" stroke-width="1.3"/>
<circle cx="1252.00" cy="432.00" r="4.0" fill="#c03a3a"/><path d="M1246.00,432.00 H1258.00 M1252.00,426.00 V438.00" stroke="#c03a3a" stroke-width="1.3"/>
<circle cx="1252.00" cy="448.40" r="4.0" fill="#c03a3a"/><path d="M1246.00,448.40 H1258.00 M1252.00,442.40 V454.40" stroke="#c03a3a" stroke-width="1.3"/>
<circle cx="1252.00" cy="465.00" r="4.0" fill="#c03a3a"/><path d="M1246.00,465.00 H1258.00 M1252.00,459.00 V471.00" stroke="#c03a3a" stroke-width="1.3"/>
<circle cx="1252.00" cy="481.50" r="4.0" fill="#c03a3a"/><path d="M1246.00,481.50 H1258.00 M1252.00,475.50 V487.50" stroke="#c03a3a" stroke-width="1.3"/>
<circle cx="1456.90" cy="432.00" r="4.0" fill="#c03a3a"/><path d="M1450.90,432.00 H1462.90 M1456.90,426.00 V438.00" stroke="#c03a3a" stroke-width="1.3"/>
<circle cx="1456.90" cy="448.40" r="4.0" fill="#c03a3a"/><path d="M1450.90,448.40 H1462.90 M1456.90,442.40 V454.40" stroke="#c03a3a" stroke-width="1.3"/>
<circle cx="1456.90" cy="465.00" r="4.0" fill="#c03a3a"/><path d="M1450.90,465.00 H1462.90 M1456.90,459.00 V471.00" stroke="#c03a3a" stroke-width="1.3"/>
<circle cx="1456.90" cy="481.50" r="4.0" fill="#c03a3a"/><path d="M1450.90,481.50 H1462.90 M1456.90,475.50 V487.50" stroke="#c03a3a" stroke-width="1.3"/>
<circle cx="1473.20" cy="432.00" r="4.0" fill="#c03a3a"/><path d="M1467.20,432.00 H1479.20 M1473.20,426.00 V438.00" stroke="#c03a3a" stroke-width="1.3"/>
<circle cx="1473.20" cy="448.40" r="4.0" fill="#c03a3a"/><path d="M1467.20,448.40 H1479.20 M1473.20,442.40 V454.40" stroke="#c03a3a" stroke-width="1.3"/>
<circle cx="1473.20" cy="465.00" r="4.0" fill="#c03a3a"/><path d="M1467.20,465.00 H1479.20 M1473.20,459.00 V471.00" stroke="#c03a3a" stroke-width="1.3"/>
<circle cx="1473.20" cy="481.50" r="4.0" fill="#c03a3a"/><path d="M1467.20,481.50 H1479.20 M1473.20,475.50 V487.50" stroke="#c03a3a" stroke-width="1.3"/>
<line x1="1212.80" y1="432.00" x2="1229.80" y2="432.00" stroke="#ececec" stroke-width="1.4" />
<line x1="1479.00" y1="432.00" x2="1496.00" y2="432.00" stroke="#ececec" stroke-width="1.4" />
<line x1="1212.80" y1="448.40" x2="1229.80" y2="448.40" stroke="#ececec" stroke-width="1.4" />
<line x1="1479.00" y1="448.40" x2="1496.00" y2="448.40" stroke="#ececec" stroke-width="1.4" />
<line x1="1212.80" y1="465.00" x2="1229.80" y2="465.00" stroke="#ececec" stroke-width="1.4" />
<line x1="1479.00" y1="465.00" x2="1496.00" y2="465.00" stroke="#ececec" stroke-width="1.4" />
<line x1="1212.80" y1="481.50" x2="1229.80" y2="481.50" stroke="#ececec" stroke-width="1.4" />
<line x1="1479.00" y1="481.50" x2="1496.00" y2="481.50" stroke="#ececec" stroke-width="1.4" />
<line x1="1212.80" y1="502.60" x2="1229.80" y2="502.60" stroke="#ececec" stroke-width="1.4" />
<line x1="1479.00" y1="502.60" x2="1496.00" y2="502.60" stroke="#ececec" stroke-width="1.4" />
<line x1="1217.30" y1="432.00" x2="1217.30" y2="502.60" stroke="#ececec" stroke-width="1.4" />
<line x1="1492.50" y1="432.00" x2="1492.50" y2="502.60" stroke="#ececec" stroke-width="1.4" />
<text x="1215.30" y="445.00" font-family="Liberation Sans" font-size="6.5" fill="#138c8c" text-anchor="start" transform="rotate(-90 1215.30 445.00)" textLength="6" lengthAdjust="spacingAndGlyphs">40</text>
<text x="1491.50" y="445.00" font-family="Liberation Sans" font-size="6.5" fill="#138c8c" text-anchor="start" transform="rotate(-90 1491.50 445.00)" textLength="6" lengthAdjust="spacingAndGlyphs">40</text>
<text x="1215.30" y="461.00" font-family="Liberation Sans" font-size="6.5" fill="#138c8c" text-anchor="start" transform="rotate(-90 1215.30 461.00)" textLength="6" lengthAdjust="spacingAndGlyphs">40</text>
<text x="1491.50" y="461.00" font-family="Liberation Sans" font-size="6.5" fill="#138c8c" text-anchor="start" transform="rotate(-90 1491.50 461.00)" textLength="6" lengthAdjust="spacingAndGlyphs">40</text>
<text x="1215.30" y="478.00" font-family="Liberation Sans" font-size="6.5" fill="#138c8c" text-anchor="start" transform="rotate(-90 1215.30 478.00)" textLength="6" lengthAdjust="spacingAndGlyphs">40</text>
<text x="1491.50" y="478.00" font-family="Liberation Sans" font-size="6.5" fill="#138c8c" text-anchor="start" transform="rotate(-90 1491.50 478.00)" textLength="6" lengthAdjust="spacingAndGlyphs">40</text>
<text x="1215.30" y="496.00" font-family="Liberation Sans" font-size="6.5" fill="#138c8c" text-anchor="start" transform="rotate(-90 1215.30 496.00)" textLength="6" lengthAdjust="spacingAndGlyphs">50</text>
<text x="1491.50" y="496.00" font-family="Liberation Sans" font-size="6.5" fill="#138c8c" text-anchor="start" transform="rotate(-90 1491.50 496.00)" textLength="6" lengthAdjust="spacingAndGlyphs">50</text>
<line x1="1226.80" y1="457.00" x2="1267.80" y2="457.00" stroke="#ececec" stroke-width="1.8" />
<line x1="1290.80" y1="457.00" x2="1331.80" y2="457.00" stroke="#ececec" stroke-width="1.8" />
<line x1="1354.80" y1="457.00" x2="1395.80" y2="457.00" stroke="#ececec" stroke-width="1.8" />
<line x1="1418.80" y1="457.00" x2="1459.80" y2="457.00" stroke="#ececec" stroke-width="1.8" />
<line x1="1354.10" y1="411.00" x2="1354.10" y2="415.00" stroke="#f01010" stroke-width="1.6" />
<line x1="1357.10" y1="411.00" x2="1357.10" y2="415.00" stroke="#f01010" stroke-width="1.6" />
<line x1="1354.10" y1="417.00" x2="1354.10" y2="421.00" stroke="#f01010" stroke-width="1.6" />
<line x1="1357.10" y1="417.00" x2="1357.10" y2="421.00" stroke="#f01010" stroke-width="1.6" />
<line x1="1354.10" y1="423.00" x2="1354.10" y2="427.00" stroke="#f01010" stroke-width="1.6" />
<line x1="1357.10" y1="423.00" x2="1357.10" y2="427.00" stroke="#f01010" stroke-width="1.6" />
<line x1="1354.10" y1="429.00" x2="1354.10" y2="433.00" stroke="#f01010" stroke-width="1.6" />
<line x1="1357.10" y1="429.00" x2="1357.10" y2="433.00" stroke="#f01010" stroke-width="1.6" />
<line x1="1354.10" y1="435.00" x2="1354.10" y2="439.00" stroke="#f01010" stroke-width="1.6" />
<line x1="1357.10" y1="435.00" x2="1357.10" y2="439.00" stroke="#f01010" stroke-width="1.6" />
<line x1="1354.10" y1="441.00" x2="1354.10" y2="445.00" stroke="#f01010" stroke-width="1.6" />
<line x1="1357.10" y1="441.00" x2="1357.10" y2="445.00" stroke="#f01010" stroke-width="1.6" />
<line x1="1354.10" y1="447.00" x2="1354.10" y2="451.00" stroke="#f01010" stroke-width="1.6" />
<line x1="1357.10" y1="447.00" x2="1357.10" y2="451.00" stroke="#f01010" stroke-width="1.6" />
<line x1="1354.10" y1="453.00" x2="1354.10" y2="457.00" stroke="#f01010" stroke-width="1.6" />
<line x1="1357.10" y1="453.00" x2="1357.10" y2="457.00" stroke="#f01010" stroke-width="1.6" />
<line x1="1354.10" y1="459.00" x2="1354.10" y2="463.00" stroke="#f01010" stroke-width="1.6" />
<line x1="1357.10" y1="459.00" x2="1357.10" y2="463.00" stroke="#f01010" stroke-width="1.6" />
<line x1="1354.10" y1="465.00" x2="1354.10" y2="469.00" stroke="#f01010" stroke-width="1.6" />
<line x1="1357.10" y1="465.00" x2="1357.10" y2="469.00" stroke="#f01010" stroke-width="1.6" />
<line x1="1354.10" y1="471.00" x2="1354.10" y2="475.00" stroke="#f01010" stroke-width="1.6" />
<line x1="1357.10" y1="471.00" x2="1357.10" y2="475.00" stroke="#f01010" stroke-width="1.6" />
<line x1="1354.10" y1="477.00" x2="1354.10" y2="481.00" stroke="#f01010" stroke-width="1.6" />
<line x1="1357.10" y1="477.00" x2="1357.10" y2="481.00" stroke="#f01010" stroke-width="1.6" />
<line x1="1354.10" y1="483.00" x2="1354.10" y2="487.00" stroke="#f01010" stroke-width="1.6" />
<line x1="1357.10" y1="483.00" x2="1357.10" y2="487.00" stroke="#f01010" stroke-width="1.6" />
<line x1="1354.10" y1="489.00" x2="1354.10" y2="493.00" stroke="#f01010" stroke-width="1.6" />
<line x1="1357.10" y1="489.00" x2="1357.10" y2="493.00" stroke="#f01010" stroke-width="1.6" />
<line x1="1354.10" y1="495.00" x2="1354.10" y2="499.00" stroke="#f01010" stroke-width="1.6" />
<line x1="1357.10" y1="495.00" x2="1357.10" y2="499.00" stroke="#f01010" stroke-width="1.6" />
<line x1="1354.10" y1="501.00" x2="1354.10" y2="505.00" stroke="#f01010" stroke-width="1.6" />
<line x1="1357.10" y1="501.00" x2="1357.10" y2="505.00" stroke="#f01010" stroke-width="1.6" />
<text x="1355.60" y="510.60" font-family="Liberation Sans" font-size="7.5" fill="#138c8c" text-anchor="middle" textLength="28" lengthAdjust="spacingAndGlyphs">B79 IPN220</text>
<text x="1355.60" y="526.60" font-family="Liberation Sans" font-size="10" fill="#12901c" text-anchor="middle" textLength="19.6" lengthAdjust="spacingAndGlyphs">1:5 Ön</text>
<rect x="1235.9" y="474.5" width="16" height="5.8" rx="1" fill="#000" stroke="#ececec" stroke-width="1.2"/>
<line x1="1238.40" y1="477.40" x2="1249.40" y2="477.40" stroke="#138c8c" stroke-width="2.5" />
<rect x="1455" y="487.5" width="17" height="5.8" rx="1" fill="#000" stroke="#ececec" stroke-width="1.2"/>
<line x1="1458.00" y1="490.40" x2="1469.00" y2="490.40" stroke="#138c8c" stroke-width="2.5" />
<line x1="1227.30" y1="563.50" x2="1482.50" y2="563.50" stroke="#ececec" stroke-width="1.4" />
<line x1="1227.30" y1="559.50" x2="1227.30" y2="591.50" stroke="#ececec" stroke-width="1.5" />
<line x1="1482.50" y1="551.50" x2="1482.50" y2="591.50" stroke="#ececec" stroke-width="1.5" />
<line x1="1235.80" y1="549.50" x2="1235.80" y2="604.90" stroke="#ececec" stroke-width="1.5" />
<line x1="1252.40" y1="549.50" x2="1252.40" y2="604.90" stroke="#ececec" stroke-width="1.5" />
<line x1="1269.00" y1="549.50" x2="1269.00" y2="604.90" stroke="#ececec" stroke-width="1.5" />
<line x1="1440.00" y1="549.50" x2="1440.00" y2="604.90" stroke="#ececec" stroke-width="1.5" />
<line x1="1456.80" y1="549.50" x2="1456.80" y2="604.90" stroke="#ececec" stroke-width="1.5" />
<line x1="1473.50" y1="549.50" x2="1473.50" y2="604.90" stroke="#ececec" stroke-width="1.5" />
<text x="1355.60" y="562.00" font-family="Liberation Sans" font-size="7" fill="#138c8c" text-anchor="middle" textLength="11" lengthAdjust="spacingAndGlyphs">1060</text>
<text x="1226.30" y="562.50" font-family="Liberation Sans" font-size="6.5" fill="#138c8c" text-anchor="start" transform="rotate(-90 1226.30 562.50)" textLength="4" lengthAdjust="spacingAndGlyphs">0</text>
<text x="1234.30" y="562.50" font-family="Liberation Sans" font-size="6.5" fill="#138c8c" text-anchor="start" transform="rotate(-90 1234.30 562.50)" textLength="8" lengthAdjust="spacingAndGlyphs">20</text>
<text x="1234.30" y="553.50" font-family="Liberation Sans" font-size="6.5" fill="#138c8c" text-anchor="start" transform="rotate(-90 1234.30 553.50)" textLength="7" lengthAdjust="spacingAndGlyphs">20</text>
<text x="1243.80" y="562.50" font-family="Liberation Sans" font-size="6.5" fill="#138c8c" text-anchor="start" transform="rotate(-90 1243.80 562.50)" textLength="6" lengthAdjust="spacingAndGlyphs">40</text>
<text x="1250.90" y="553.50" font-family="Liberation Sans" font-size="6.5" fill="#138c8c" text-anchor="start" transform="rotate(-90 1250.90 553.50)" textLength="7" lengthAdjust="spacingAndGlyphs">60</text>
<text x="1260.40" y="562.50" font-family="Liberation Sans" font-size="6.5" fill="#138c8c" text-anchor="start" transform="rotate(-90 1260.40 562.50)" textLength="6" lengthAdjust="spacingAndGlyphs">40</text>
<text x="1267.50" y="553.50" font-family="Liberation Sans" font-size="6.5" fill="#138c8c" text-anchor="start" transform="rotate(-90 1267.50 553.50)" textLength="10" lengthAdjust="spacingAndGlyphs">100</text>
<text x="1438.50" y="562.50" font-family="Liberation Sans" font-size="6.5" fill="#138c8c" text-anchor="start" transform="rotate(-90 1438.50 562.50)" textLength="12" lengthAdjust="spacingAndGlyphs">1160</text>
<text x="1448.00" y="562.50" font-family="Liberation Sans" font-size="6.5" fill="#138c8c" text-anchor="start" transform="rotate(-90 1448.00 562.50)" textLength="6" lengthAdjust="spacingAndGlyphs">40</text>
<text x="1455.30" y="553.50" font-family="Liberation Sans" font-size="6.5" fill="#138c8c" text-anchor="start" transform="rotate(-90 1455.30 553.50)" textLength="12" lengthAdjust="spacingAndGlyphs">1200</text>
<text x="1464.80" y="562.50" font-family="Liberation Sans" font-size="6.5" fill="#138c8c" text-anchor="start" transform="rotate(-90 1464.80 562.50)" textLength="6" lengthAdjust="spacingAndGlyphs">40</text>
<text x="1472.00" y="553.50" font-family="Liberation Sans" font-size="6.5" fill="#138c8c" text-anchor="start" transform="rotate(-90 1472.00 553.50)" textLength="12" lengthAdjust="spacingAndGlyphs">1240</text>
<text x="1481.50" y="562.50" font-family="Liberation Sans" font-size="6.5" fill="#138c8c" text-anchor="start" transform="rotate(-90 1481.50 562.50)" textLength="6" lengthAdjust="spacingAndGlyphs">20</text>
<text x="1481.00" y="553.50" font-family="Liberation Sans" font-size="6.5" fill="#138c8c" text-anchor="start" transform="rotate(-90 1481.00 553.50)" textLength="12" lengthAdjust="spacingAndGlyphs">1260</text>
<rect x="1227.3" y="594.9" width="255.20000000000005" height="40.299999999999955" fill="none" stroke="#5580bd" stroke-width="1.7"/>
<line x1="1227.30" y1="615.00" x2="1482.50" y2="615.00" stroke="#ececec" stroke-width="1.5" />
<rect x="1252.80" y="613.40" width="37.20" height="3.2" fill="#000" stroke="#ececec" stroke-width="1.2"/>
<rect x="1313.40" y="613.40" width="40.40" height="3.2" fill="#000" stroke="#ececec" stroke-width="1.2"/>
<rect x="1313.40" y="613.40" width="17.90" height="3.2" fill="#ececec"/>
<rect x="1377.70" y="613.40" width="39.90" height="3.2" fill="#000" stroke="#ececec" stroke-width="1.2"/>
<rect x="1377.70" y="613.40" width="17.30" height="3.2" fill="#ececec"/>
<rect x="1441.50" y="613.40" width="39.90" height="3.2" fill="#000" stroke="#ececec" stroke-width="1.2"/>
<rect x="1441.50" y="613.40" width="12.00" height="3.2" fill="#ececec"/>
<circle cx="1235.80" cy="604.70" r="4.0" fill="#c03a3a"/><path d="M1229.80,604.70 H1241.80 M1235.80,598.70 V610.70" stroke="#c03a3a" stroke-width="1.3"/>
<circle cx="1235.80" cy="625.40" r="4.0" fill="#c03a3a"/><path d="M1229.80,625.40 H1241.80 M1235.80,619.40 V631.40" stroke="#c03a3a" stroke-width="1.3"/>
<circle cx="1252.40" cy="604.70" r="4.0" fill="#c03a3a"/><path d="M1246.40,604.70 H1258.40 M1252.40,598.70 V610.70" stroke="#c03a3a" stroke-width="1.3"/>
<circle cx="1252.40" cy="625.40" r="4.0" fill="#c03a3a"/><path d="M1246.40,625.40 H1258.40 M1252.40,619.40 V631.40" stroke="#c03a3a" stroke-width="1.3"/>
<circle cx="1269.00" cy="604.70" r="4.0" fill="#c03a3a"/><path d="M1263.00,604.70 H1275.00 M1269.00,598.70 V610.70" stroke="#c03a3a" stroke-width="1.3"/>
<circle cx="1269.00" cy="625.40" r="4.0" fill="#c03a3a"/><path d="M1263.00,625.40 H1275.00 M1269.00,619.40 V631.40" stroke="#c03a3a" stroke-width="1.3"/>
<circle cx="1440.00" cy="604.70" r="4.0" fill="#c03a3a"/><path d="M1434.00,604.70 H1446.00 M1440.00,598.70 V610.70" stroke="#c03a3a" stroke-width="1.3"/>
<circle cx="1440.00" cy="625.40" r="4.0" fill="#c03a3a"/><path d="M1434.00,625.40 H1446.00 M1440.00,619.40 V631.40" stroke="#c03a3a" stroke-width="1.3"/>
<circle cx="1456.80" cy="604.70" r="4.0" fill="#c03a3a"/><path d="M1450.80,604.70 H1462.80 M1456.80,598.70 V610.70" stroke="#c03a3a" stroke-width="1.3"/>
<circle cx="1456.80" cy="625.40" r="4.0" fill="#c03a3a"/><path d="M1450.80,625.40 H1462.80 M1456.80,619.40 V631.40" stroke="#c03a3a" stroke-width="1.3"/>
<circle cx="1473.50" cy="604.70" r="4.0" fill="#c03a3a"/><path d="M1467.50,604.70 H1479.50 M1473.50,598.70 V610.70" stroke="#c03a3a" stroke-width="1.3"/>
<circle cx="1473.50" cy="625.40" r="4.0" fill="#c03a3a"/><path d="M1467.50,625.40 H1479.50 M1473.50,619.40 V631.40" stroke="#c03a3a" stroke-width="1.3"/>
<circle cx="1235.8" cy="615.0" r="3" fill="#000" stroke="#ececec" stroke-width="1.2"/>
<line x1="1235.80" y1="611.00" x2="1235.80" y2="619.00" stroke="#ececec" stroke-width="1.5" />
<circle cx="1252.4" cy="615.0" r="3" fill="#000" stroke="#ececec" stroke-width="1.2"/>
<line x1="1252.40" y1="611.00" x2="1252.40" y2="619.00" stroke="#ececec" stroke-width="1.5" />
<circle cx="1456.8" cy="615.0" r="3" fill="#000" stroke="#ececec" stroke-width="1.2"/>
<line x1="1456.80" y1="611.00" x2="1456.80" y2="619.00" stroke="#ececec" stroke-width="1.5" />
<circle cx="1473.5" cy="615.0" r="3" fill="#000" stroke="#ececec" stroke-width="1.2"/>
<line x1="1473.50" y1="611.00" x2="1473.50" y2="619.00" stroke="#ececec" stroke-width="1.5" />
<line x1="1213.30" y1="604.70" x2="1230.30" y2="604.70" stroke="#ececec" stroke-width="1.4" />
<line x1="1479.50" y1="604.70" x2="1496.50" y2="604.70" stroke="#ececec" stroke-width="1.4" />
<line x1="1213.30" y1="625.40" x2="1230.30" y2="625.40" stroke="#ececec" stroke-width="1.4" />
<line x1="1479.50" y1="625.40" x2="1496.50" y2="625.40" stroke="#ececec" stroke-width="1.4" />
<line x1="1213.30" y1="635.20" x2="1230.30" y2="635.20" stroke="#ececec" stroke-width="1.4" />
<line x1="1479.50" y1="635.20" x2="1496.50" y2="635.20" stroke="#ececec" stroke-width="1.4" />
<line x1="1217.30" y1="604.70" x2="1217.30" y2="635.20" stroke="#ececec" stroke-width="1.4" />
<line x1="1492.50" y1="604.70" x2="1492.50" y2="635.20" stroke="#ececec" stroke-width="1.4" />
<text x="1215.80" y="618.90" font-family="Liberation Sans" font-size="6.5" fill="#138c8c" text-anchor="start" transform="rotate(-90 1215.80 618.90)" textLength="6" lengthAdjust="spacingAndGlyphs">50</text>
<text x="1215.80" y="633.90" font-family="Liberation Sans" font-size="6.5" fill="#138c8c" text-anchor="start" transform="rotate(-90 1215.80 633.90)" textLength="6" lengthAdjust="spacingAndGlyphs">24</text>
<text x="1491.00" y="618.90" font-family="Liberation Sans" font-size="6.5" fill="#138c8c" text-anchor="start" transform="rotate(-90 1491.00 618.90)" textLength="6" lengthAdjust="spacingAndGlyphs">50</text>
<text x="1491.00" y="633.90" font-family="Liberation Sans" font-size="6.5" fill="#138c8c" text-anchor="start" transform="rotate(-90 1491.00 633.90)" textLength="6" lengthAdjust="spacingAndGlyphs">24</text>
<line x1="1354.10" y1="590.00" x2="1354.10" y2="594.00" stroke="#f01010" stroke-width="1.6" />
<line x1="1357.10" y1="590.00" x2="1357.10" y2="594.00" stroke="#f01010" stroke-width="1.6" />
<line x1="1354.10" y1="596.00" x2="1354.10" y2="600.00" stroke="#f01010" stroke-width="1.6" />
<line x1="1357.10" y1="596.00" x2="1357.10" y2="600.00" stroke="#f01010" stroke-width="1.6" />
<line x1="1354.10" y1="602.00" x2="1354.10" y2="606.00" stroke="#f01010" stroke-width="1.6" />
<line x1="1357.10" y1="602.00" x2="1357.10" y2="606.00" stroke="#f01010" stroke-width="1.6" />
<line x1="1354.10" y1="608.00" x2="1354.10" y2="612.00" stroke="#f01010" stroke-width="1.6" />
<line x1="1357.10" y1="608.00" x2="1357.10" y2="612.00" stroke="#f01010" stroke-width="1.6" />
<line x1="1354.10" y1="614.00" x2="1354.10" y2="618.00" stroke="#f01010" stroke-width="1.6" />
<line x1="1357.10" y1="614.00" x2="1357.10" y2="618.00" stroke="#f01010" stroke-width="1.6" />
<line x1="1354.10" y1="620.00" x2="1354.10" y2="624.00" stroke="#f01010" stroke-width="1.6" />
<line x1="1357.10" y1="620.00" x2="1357.10" y2="624.00" stroke="#f01010" stroke-width="1.6" />
<line x1="1354.10" y1="626.00" x2="1354.10" y2="630.00" stroke="#f01010" stroke-width="1.6" />
<line x1="1357.10" y1="626.00" x2="1357.10" y2="630.00" stroke="#f01010" stroke-width="1.6" />
<line x1="1354.10" y1="632.00" x2="1354.10" y2="636.00" stroke="#f01010" stroke-width="1.6" />
<line x1="1357.10" y1="632.00" x2="1357.10" y2="636.00" stroke="#f01010" stroke-width="1.6" />
<text x="1355.60" y="652.70" font-family="Liberation Sans" font-size="10" fill="#12901c" text-anchor="middle" textLength="20" lengthAdjust="spacingAndGlyphs">1:5 Üst</text>
<rect x="1235.7" y="595.5" width="16.5" height="5.8" rx="1" fill="#000" stroke="#ececec" stroke-width="1.2"/>
<line x1="1238.70" y1="598.40" x2="1249.20" y2="598.40" stroke="#138c8c" stroke-width="2.5" />
<rect x="1457" y="595.5" width="16.5" height="5.8" rx="1" fill="#000" stroke="#ececec" stroke-width="1.2"/>
<line x1="1460.00" y1="598.40" x2="1470.50" y2="598.40" stroke="#138c8c" stroke-width="2.5" />
<line x1="1227.30" y1="689.90" x2="1482.50" y2="689.90" stroke="#ececec" stroke-width="1.4" />
<line x1="1227.30" y1="685.90" x2="1227.30" y2="717.90" stroke="#ececec" stroke-width="1.5" />
<line x1="1482.50" y1="677.90" x2="1482.50" y2="717.90" stroke="#ececec" stroke-width="1.5" />
<line x1="1235.80" y1="675.90" x2="1235.80" y2="731.30" stroke="#ececec" stroke-width="1.5" />
<line x1="1252.40" y1="675.90" x2="1252.40" y2="731.30" stroke="#ececec" stroke-width="1.5" />
<line x1="1269.00" y1="675.90" x2="1269.00" y2="731.30" stroke="#ececec" stroke-width="1.5" />
<line x1="1440.00" y1="675.90" x2="1440.00" y2="731.30" stroke="#ececec" stroke-width="1.5" />
<line x1="1456.80" y1="675.90" x2="1456.80" y2="731.30" stroke="#ececec" stroke-width="1.5" />
<line x1="1473.50" y1="675.90" x2="1473.50" y2="731.30" stroke="#ececec" stroke-width="1.5" />
<text x="1355.60" y="688.40" font-family="Liberation Sans" font-size="7" fill="#138c8c" text-anchor="middle" textLength="11" lengthAdjust="spacingAndGlyphs">1060</text>
<text x="1226.30" y="688.90" font-family="Liberation Sans" font-size="6.5" fill="#138c8c" text-anchor="start" transform="rotate(-90 1226.30 688.90)" textLength="4" lengthAdjust="spacingAndGlyphs">0</text>
<text x="1234.30" y="688.90" font-family="Liberation Sans" font-size="6.5" fill="#138c8c" text-anchor="start" transform="rotate(-90 1234.30 688.90)" textLength="8" lengthAdjust="spacingAndGlyphs">20</text>
<text x="1234.30" y="679.90" font-family="Liberation Sans" font-size="6.5" fill="#138c8c" text-anchor="start" transform="rotate(-90 1234.30 679.90)" textLength="7" lengthAdjust="spacingAndGlyphs">20</text>
<text x="1243.80" y="688.90" font-family="Liberation Sans" font-size="6.5" fill="#138c8c" text-anchor="start" transform="rotate(-90 1243.80 688.90)" textLength="6" lengthAdjust="spacingAndGlyphs">40</text>
<text x="1250.90" y="679.90" font-family="Liberation Sans" font-size="6.5" fill="#138c8c" text-anchor="start" transform="rotate(-90 1250.90 679.90)" textLength="7" lengthAdjust="spacingAndGlyphs">60</text>
<text x="1260.40" y="688.90" font-family="Liberation Sans" font-size="6.5" fill="#138c8c" text-anchor="start" transform="rotate(-90 1260.40 688.90)" textLength="6" lengthAdjust="spacingAndGlyphs">40</text>
<text x="1267.50" y="679.90" font-family="Liberation Sans" font-size="6.5" fill="#138c8c" text-anchor="start" transform="rotate(-90 1267.50 679.90)" textLength="10" lengthAdjust="spacingAndGlyphs">100</text>
<text x="1438.50" y="688.90" font-family="Liberation Sans" font-size="6.5" fill="#138c8c" text-anchor="start" transform="rotate(-90 1438.50 688.90)" textLength="12" lengthAdjust="spacingAndGlyphs">1160</text>
<text x="1448.00" y="688.90" font-family="Liberation Sans" font-size="6.5" fill="#138c8c" text-anchor="start" transform="rotate(-90 1448.00 688.90)" textLength="6" lengthAdjust="spacingAndGlyphs">40</text>
<text x="1455.30" y="679.90" font-family="Liberation Sans" font-size="6.5" fill="#138c8c" text-anchor="start" transform="rotate(-90 1455.30 679.90)" textLength="12" lengthAdjust="spacingAndGlyphs">1200</text>
<text x="1464.80" y="688.90" font-family="Liberation Sans" font-size="6.5" fill="#138c8c" text-anchor="start" transform="rotate(-90 1464.80 688.90)" textLength="6" lengthAdjust="spacingAndGlyphs">40</text>
<text x="1472.00" y="679.90" font-family="Liberation Sans" font-size="6.5" fill="#138c8c" text-anchor="start" transform="rotate(-90 1472.00 679.90)" textLength="12" lengthAdjust="spacingAndGlyphs">1240</text>
<text x="1481.50" y="688.90" font-family="Liberation Sans" font-size="6.5" fill="#138c8c" text-anchor="start" transform="rotate(-90 1481.50 688.90)" textLength="6" lengthAdjust="spacingAndGlyphs">20</text>
<text x="1481.00" y="679.90" font-family="Liberation Sans" font-size="6.5" fill="#138c8c" text-anchor="start" transform="rotate(-90 1481.00 679.90)" textLength="12" lengthAdjust="spacingAndGlyphs">1260</text>
<rect x="1227.3" y="721.3" width="255.20000000000005" height="40.299999999999955" fill="none" stroke="#5580bd" stroke-width="1.7"/>
<line x1="1227.30" y1="741.40" x2="1482.50" y2="741.40" stroke="#ececec" stroke-width="1.5" />
<rect x="1252.80" y="739.80" width="37.20" height="3.2" fill="#000" stroke="#ececec" stroke-width="1.2"/>
<rect x="1313.40" y="739.80" width="40.40" height="3.2" fill="#000" stroke="#ececec" stroke-width="1.2"/>
<rect x="1313.40" y="739.80" width="17.90" height="3.2" fill="#ececec"/>
<rect x="1377.70" y="739.80" width="39.90" height="3.2" fill="#000" stroke="#ececec" stroke-width="1.2"/>
<rect x="1377.70" y="739.80" width="17.30" height="3.2" fill="#ececec"/>
<rect x="1441.50" y="739.80" width="39.90" height="3.2" fill="#000" stroke="#ececec" stroke-width="1.2"/>
<rect x="1441.50" y="739.80" width="12.00" height="3.2" fill="#ececec"/>
<circle cx="1235.80" cy="731.10" r="4.0" fill="#c03a3a"/><path d="M1229.80,731.10 H1241.80 M1235.80,725.10 V737.10" stroke="#c03a3a" stroke-width="1.3"/>
<circle cx="1235.80" cy="751.80" r="4.0" fill="#c03a3a"/><path d="M1229.80,751.80 H1241.80 M1235.80,745.80 V757.80" stroke="#c03a3a" stroke-width="1.3"/>
<circle cx="1252.40" cy="731.10" r="4.0" fill="#c03a3a"/><path d="M1246.40,731.10 H1258.40 M1252.40,725.10 V737.10" stroke="#c03a3a" stroke-width="1.3"/>
<circle cx="1252.40" cy="751.80" r="4.0" fill="#c03a3a"/><path d="M1246.40,751.80 H1258.40 M1252.40,745.80 V757.80" stroke="#c03a3a" stroke-width="1.3"/>
<circle cx="1269.00" cy="731.10" r="4.0" fill="#c03a3a"/><path d="M1263.00,731.10 H1275.00 M1269.00,725.10 V737.10" stroke="#c03a3a" stroke-width="1.3"/>
<circle cx="1269.00" cy="751.80" r="4.0" fill="#c03a3a"/><path d="M1263.00,751.80 H1275.00 M1269.00,745.80 V757.80" stroke="#c03a3a" stroke-width="1.3"/>
<circle cx="1440.00" cy="731.10" r="4.0" fill="#c03a3a"/><path d="M1434.00,731.10 H1446.00 M1440.00,725.10 V737.10" stroke="#c03a3a" stroke-width="1.3"/>
<circle cx="1440.00" cy="751.80" r="4.0" fill="#c03a3a"/><path d="M1434.00,751.80 H1446.00 M1440.00,745.80 V757.80" stroke="#c03a3a" stroke-width="1.3"/>
<circle cx="1456.80" cy="731.10" r="4.0" fill="#c03a3a"/><path d="M1450.80,731.10 H1462.80 M1456.80,725.10 V737.10" stroke="#c03a3a" stroke-width="1.3"/>
<circle cx="1456.80" cy="751.80" r="4.0" fill="#c03a3a"/><path d="M1450.80,751.80 H1462.80 M1456.80,745.80 V757.80" stroke="#c03a3a" stroke-width="1.3"/>
<circle cx="1473.50" cy="731.10" r="4.0" fill="#c03a3a"/><path d="M1467.50,731.10 H1479.50 M1473.50,725.10 V737.10" stroke="#c03a3a" stroke-width="1.3"/>
<circle cx="1473.50" cy="751.80" r="4.0" fill="#c03a3a"/><path d="M1467.50,751.80 H1479.50 M1473.50,745.80 V757.80" stroke="#c03a3a" stroke-width="1.3"/>
<circle cx="1235.8" cy="741.4" r="3" fill="#000" stroke="#ececec" stroke-width="1.2"/>
<line x1="1235.80" y1="737.40" x2="1235.80" y2="745.40" stroke="#ececec" stroke-width="1.5" />
<circle cx="1252.4" cy="741.4" r="3" fill="#000" stroke="#ececec" stroke-width="1.2"/>
<line x1="1252.40" y1="737.40" x2="1252.40" y2="745.40" stroke="#ececec" stroke-width="1.5" />
<circle cx="1456.8" cy="741.4" r="3" fill="#000" stroke="#ececec" stroke-width="1.2"/>
<line x1="1456.80" y1="737.40" x2="1456.80" y2="745.40" stroke="#ececec" stroke-width="1.5" />
<circle cx="1473.5" cy="741.4" r="3" fill="#000" stroke="#ececec" stroke-width="1.2"/>
<line x1="1473.50" y1="737.40" x2="1473.50" y2="745.40" stroke="#ececec" stroke-width="1.5" />
<line x1="1213.30" y1="731.10" x2="1230.30" y2="731.10" stroke="#ececec" stroke-width="1.4" />
<line x1="1479.50" y1="731.10" x2="1496.50" y2="731.10" stroke="#ececec" stroke-width="1.4" />
<line x1="1213.30" y1="751.80" x2="1230.30" y2="751.80" stroke="#ececec" stroke-width="1.4" />
<line x1="1479.50" y1="751.80" x2="1496.50" y2="751.80" stroke="#ececec" stroke-width="1.4" />
<line x1="1213.30" y1="761.60" x2="1230.30" y2="761.60" stroke="#ececec" stroke-width="1.4" />
<line x1="1479.50" y1="761.60" x2="1496.50" y2="761.60" stroke="#ececec" stroke-width="1.4" />
<line x1="1217.30" y1="731.10" x2="1217.30" y2="761.60" stroke="#ececec" stroke-width="1.4" />
<line x1="1492.50" y1="731.10" x2="1492.50" y2="761.60" stroke="#ececec" stroke-width="1.4" />
<text x="1215.80" y="745.30" font-family="Liberation Sans" font-size="6.5" fill="#138c8c" text-anchor="start" transform="rotate(-90 1215.80 745.30)" textLength="6" lengthAdjust="spacingAndGlyphs">50</text>
<text x="1215.80" y="760.30" font-family="Liberation Sans" font-size="6.5" fill="#138c8c" text-anchor="start" transform="rotate(-90 1215.80 760.30)" textLength="6" lengthAdjust="spacingAndGlyphs">24</text>
<text x="1491.00" y="745.30" font-family="Liberation Sans" font-size="6.5" fill="#138c8c" text-anchor="start" transform="rotate(-90 1491.00 745.30)" textLength="6" lengthAdjust="spacingAndGlyphs">50</text>
<text x="1491.00" y="760.30" font-family="Liberation Sans" font-size="6.5" fill="#138c8c" text-anchor="start" transform="rotate(-90 1491.00 760.30)" textLength="6" lengthAdjust="spacingAndGlyphs">24</text>
<line x1="1354.10" y1="717.00" x2="1354.10" y2="721.00" stroke="#f01010" stroke-width="1.6" />
<line x1="1357.10" y1="717.00" x2="1357.10" y2="721.00" stroke="#f01010" stroke-width="1.6" />
<line x1="1354.10" y1="723.00" x2="1354.10" y2="727.00" stroke="#f01010" stroke-width="1.6" />
<line x1="1357.10" y1="723.00" x2="1357.10" y2="727.00" stroke="#f01010" stroke-width="1.6" />
<line x1="1354.10" y1="729.00" x2="1354.10" y2="733.00" stroke="#f01010" stroke-width="1.6" />
<line x1="1357.10" y1="729.00" x2="1357.10" y2="733.00" stroke="#f01010" stroke-width="1.6" />
<line x1="1354.10" y1="735.00" x2="1354.10" y2="739.00" stroke="#f01010" stroke-width="1.6" />
<line x1="1357.10" y1="735.00" x2="1357.10" y2="739.00" stroke="#f01010" stroke-width="1.6" />
<line x1="1354.10" y1="741.00" x2="1354.10" y2="745.00" stroke="#f01010" stroke-width="1.6" />
<line x1="1357.10" y1="741.00" x2="1357.10" y2="745.00" stroke="#f01010" stroke-width="1.6" />
<line x1="1354.10" y1="747.00" x2="1354.10" y2="751.00" stroke="#f01010" stroke-width="1.6" />
<line x1="1357.10" y1="747.00" x2="1357.10" y2="751.00" stroke="#f01010" stroke-width="1.6" />
<line x1="1354.10" y1="753.00" x2="1354.10" y2="757.00" stroke="#f01010" stroke-width="1.6" />
<line x1="1357.10" y1="753.00" x2="1357.10" y2="757.00" stroke="#f01010" stroke-width="1.6" />
<line x1="1354.10" y1="759.00" x2="1354.10" y2="763.00" stroke="#f01010" stroke-width="1.6" />
<line x1="1357.10" y1="759.00" x2="1357.10" y2="763.00" stroke="#f01010" stroke-width="1.6" />
<text x="1355.60" y="779.10" font-family="Liberation Sans" font-size="10" fill="#12901c" text-anchor="middle" textLength="20" lengthAdjust="spacingAndGlyphs">1:5 Alt</text>
<text x="1355.00" y="798.60" font-family="Liberation Sans" font-size="14" fill="#12901c" text-anchor="middle" textLength="40.5" lengthAdjust="spacingAndGlyphs">BA51 No:1</text>
<rect x="1534.30" y="285.40" width="260.00" height="508.20" rx="0" fill="none" stroke="#ececec" stroke-width="1.5"/>
<rect x="1545.00" y="297.60" width="255.00" height="38.00" rx="0" fill="none" stroke="#ececec" stroke-width="1.5"/>
<line x1="1545.00" y1="304.20" x2="1800.00" y2="304.20" stroke="#ececec" stroke-width="1.5" />
<line x1="1545.00" y1="310.30" x2="1800.00" y2="310.30" stroke="#ececec" stroke-width="1.5" />
<line x1="1545.00" y1="316.50" x2="1800.00" y2="316.50" stroke="#ececec" stroke-width="1.5" />
<line x1="1545.00" y1="322.80" x2="1800.00" y2="322.80" stroke="#ececec" stroke-width="1.5" />
<line x1="1545.00" y1="329.10" x2="1800.00" y2="329.10" stroke="#ececec" stroke-width="1.5" />
<line x1="1576.00" y1="304.20" x2="1576.00" y2="310.30" stroke="#ececec" stroke-width="1.3" />
<line x1="1576.00" y1="316.50" x2="1576.00" y2="322.80" stroke="#ececec" stroke-width="1.3" />
<line x1="1617.00" y1="304.20" x2="1617.00" y2="310.30" stroke="#ececec" stroke-width="1.3" />
<line x1="1617.00" y1="316.50" x2="1617.00" y2="322.80" stroke="#ececec" stroke-width="1.3" />
<line x1="1648.20" y1="304.20" x2="1648.20" y2="310.30" stroke="#ececec" stroke-width="1.3" />
<line x1="1648.20" y1="316.50" x2="1648.20" y2="322.80" stroke="#ececec" stroke-width="1.3" />
<line x1="1679.80" y1="304.20" x2="1679.80" y2="310.30" stroke="#ececec" stroke-width="1.3" />
<line x1="1679.80" y1="316.50" x2="1679.80" y2="322.80" stroke="#ececec" stroke-width="1.3" />
<line x1="1710.80" y1="304.20" x2="1710.80" y2="310.30" stroke="#ececec" stroke-width="1.3" />
<line x1="1710.80" y1="316.50" x2="1710.80" y2="322.80" stroke="#ececec" stroke-width="1.3" />
<line x1="1742.10" y1="304.20" x2="1742.10" y2="310.30" stroke="#ececec" stroke-width="1.3" />
<line x1="1742.10" y1="316.50" x2="1742.10" y2="322.80" stroke="#ececec" stroke-width="1.3" />
<line x1="1679.80" y1="322.80" x2="1679.80" y2="335.60" stroke="#ececec" stroke-width="1.3" />
<line x1="1710.80" y1="322.80" x2="1710.80" y2="335.60" stroke="#ececec" stroke-width="1.3" />
<line x1="1742.10" y1="322.80" x2="1742.10" y2="335.60" stroke="#ececec" stroke-width="1.3" />
<text x="1547.00" y="303.20" font-family="Liberation Sans" font-size="6" fill="#f4f4f4" text-anchor="start" font-weight="700" textLength="34" lengthAdjust="spacingAndGlyphs">Malzeme Listesi</text>
<text x="1547.00" y="309.50" font-family="Liberation Sans" font-size="6" fill="#f4f4f4" text-anchor="start" font-weight="700" textLength="9" lengthAdjust="spacingAndGlyphs">Poz</text>
<text x="1578.00" y="309.50" font-family="Liberation Sans" font-size="6" fill="#f4f4f4" text-anchor="start" font-weight="700" textLength="19" lengthAdjust="spacingAndGlyphs">Açıklama</text>
<text x="1619.00" y="309.50" font-family="Liberation Sans" font-size="6" fill="#f4f4f4" text-anchor="start" font-weight="700" textLength="19" lengthAdjust="spacingAndGlyphs">Malzeme</text>
<text x="1650.20" y="309.50" font-family="Liberation Sans" font-size="6" fill="#f4f4f4" text-anchor="start" font-weight="700" textLength="8" lengthAdjust="spacingAndGlyphs">No</text>
<text x="1681.80" y="309.50" font-family="Liberation Sans" font-size="6" fill="#f4f4f4" text-anchor="start" font-weight="700" textLength="18" lengthAdjust="spacingAndGlyphs">Uzunluk</text>
<text x="1712.80" y="309.50" font-family="Liberation Sans" font-size="6" fill="#f4f4f4" text-anchor="start" font-weight="700" textLength="10" lengthAdjust="spacingAndGlyphs">Alan</text>
<text x="1744.10" y="309.50" font-family="Liberation Sans" font-size="6" fill="#f4f4f4" text-anchor="start" font-weight="700" textLength="15" lengthAdjust="spacingAndGlyphs">Ağırlık</text>
<text x="1547.00" y="315.70" font-family="Liberation Sans" font-size="6" fill="#f4f4f4" text-anchor="start" font-weight="700" textLength="30" lengthAdjust="spacingAndGlyphs">BA75 İçin Liste</text>
<text x="1547.00" y="321.90" font-family="Liberation Sans" font-size="6" fill="#f4f4f4" text-anchor="start" font-weight="700" textLength="9" lengthAdjust="spacingAndGlyphs">B70</text>
<text x="1578.00" y="321.90" font-family="Liberation Sans" font-size="6" fill="#f4f4f4" text-anchor="start" font-weight="700" textLength="14" lengthAdjust="spacingAndGlyphs">IPN220</text>
<text x="1619.00" y="321.90" font-family="Liberation Sans" font-size="6" fill="#f4f4f4" text-anchor="start" font-weight="700" textLength="10" lengthAdjust="spacingAndGlyphs">S235</text>
<text x="1650.20" y="321.90" font-family="Liberation Sans" font-size="6" fill="#f4f4f4" text-anchor="start" font-weight="700" textLength="2" lengthAdjust="spacingAndGlyphs">1</text>
<text x="1708.80" y="321.90" font-family="Liberation Sans" font-size="6" fill="#f4f4f4" text-anchor="end" font-weight="700" textLength="10" lengthAdjust="spacingAndGlyphs">2480</text>
<text x="1740.10" y="321.90" font-family="Liberation Sans" font-size="6" fill="#f4f4f4" text-anchor="end" font-weight="700" textLength="9" lengthAdjust="spacingAndGlyphs">0,49</text>
<text x="1771.60" y="321.90" font-family="Liberation Sans" font-size="6" fill="#f4f4f4" text-anchor="end" font-weight="700" textLength="8" lengthAdjust="spacingAndGlyphs">35,1</text>
<text x="1677.80" y="328.30" font-family="Liberation Sans" font-size="6" fill="#f4f4f4" text-anchor="end" font-weight="700" textLength="17" lengthAdjust="spacingAndGlyphs">Toplam</text>
<text x="1677.80" y="334.60" font-family="Liberation Sans" font-size="6" fill="#f4f4f4" text-anchor="end" font-weight="700" textLength="30" lengthAdjust="spacingAndGlyphs">Genel Toplam</text>
<text x="1708.80" y="328.30" font-family="Liberation Sans" font-size="6" fill="#f4f4f4" text-anchor="end" font-weight="700" textLength="19" lengthAdjust="spacingAndGlyphs">2480mm</text>
<text x="1740.10" y="328.30" font-family="Liberation Sans" font-size="6" fill="#f4f4f4" text-anchor="end" font-weight="700" textLength="15" lengthAdjust="spacingAndGlyphs">0,49m²</text>
<text x="1771.60" y="328.30" font-family="Liberation Sans" font-size="6" fill="#f4f4f4" text-anchor="end" font-weight="700" textLength="14" lengthAdjust="spacingAndGlyphs">35,1kg</text>
<text x="1708.80" y="334.60" font-family="Liberation Sans" font-size="6" fill="#f4f4f4" text-anchor="end" font-weight="700" textLength="19" lengthAdjust="spacingAndGlyphs">2480mm</text>
<text x="1740.10" y="334.60" font-family="Liberation Sans" font-size="6" fill="#f4f4f4" text-anchor="end" font-weight="700" textLength="15" lengthAdjust="spacingAndGlyphs">0,49m²</text>
<text x="1771.60" y="334.60" font-family="Liberation Sans" font-size="6" fill="#f4f4f4" text-anchor="end" font-weight="700" textLength="14" lengthAdjust="spacingAndGlyphs">35,1kg</text>
<line x1="1572.80" y1="356.00" x2="1800.00" y2="356.00" stroke="#ececec" stroke-width="1.4" />
<line x1="1572.80" y1="380.00" x2="1800.00" y2="380.00" stroke="#ececec" stroke-width="1.4" />
<line x1="1572.80" y1="352.00" x2="1572.80" y2="408.00" stroke="#ececec" stroke-width="1.5" />
<line x1="1581.60" y1="367.00" x2="1581.60" y2="432.00" stroke="#ececec" stroke-width="1.5" />
<line x1="1598.60" y1="367.00" x2="1598.60" y2="432.00" stroke="#ececec" stroke-width="1.5" />
<text x="1701.70" y="354.50" font-family="Liberation Sans" font-size="7" fill="#138c8c" text-anchor="middle" textLength="11" lengthAdjust="spacingAndGlyphs">2480</text>
<text x="1701.70" y="378.50" font-family="Liberation Sans" font-size="7" fill="#138c8c" text-anchor="middle" textLength="11" lengthAdjust="spacingAndGlyphs">2350</text>
<text x="1571.80" y="379.00" font-family="Liberation Sans" font-size="6.5" fill="#138c8c" text-anchor="start" transform="rotate(-90 1571.80 379.00)" textLength="4" lengthAdjust="spacingAndGlyphs">0</text>
<text x="1580.10" y="379.00" font-family="Liberation Sans" font-size="6.5" fill="#138c8c" text-anchor="start" transform="rotate(-90 1580.10 379.00)" textLength="8" lengthAdjust="spacingAndGlyphs">20</text>
<text x="1580.10" y="369.00" font-family="Liberation Sans" font-size="6.5" fill="#138c8c" text-anchor="start" transform="rotate(-90 1580.10 369.00)" textLength="7" lengthAdjust="spacingAndGlyphs">20</text>
<text x="1589.60" y="379.00" font-family="Liberation Sans" font-size="6.5" fill="#138c8c" text-anchor="start" transform="rotate(-90 1589.60 379.00)" textLength="6" lengthAdjust="spacingAndGlyphs">40</text>
<text x="1597.10" y="370.00" font-family="Liberation Sans" font-size="6.5" fill="#138c8c" text-anchor="start" transform="rotate(-90 1597.10 370.00)" textLength="7" lengthAdjust="spacingAndGlyphs">60</text>
<rect x="1572.8" y="411" width="227.20000000000005" height="91.60000000000002" rx="1.5" fill="none" stroke="#5580bd" stroke-width="1.7"/>
<line x1="1572.80" y1="414.60" x2="1800.00" y2="414.60" stroke="#5580bd" stroke-width="1.5" />
<line x1="1572.80" y1="417.30" x2="1800.00" y2="417.30" stroke="#5580bd" stroke-width="1.5" />
<line x1="1572.80" y1="496.40" x2="1800.00" y2="496.40" stroke="#5580bd" stroke-width="1.5" />
<line x1="1572.80" y1="499.50" x2="1800.00" y2="499.50" stroke="#5580bd" stroke-width="1.5" />
<rect x="1578.00" y="410.50" width="7.2" height="6.6" rx="1.5" fill="#b53a3a"/><line x1="1581.60" y1="407.80" x2="1581.60" y2="419.80" stroke="#b53a3a" stroke-width="1.1"/>
<rect x="1578.00" y="496.30" width="7.2" height="6.6" rx="1.5" fill="#b53a3a"/><line x1="1581.60" y1="493.60" x2="1581.60" y2="505.60" stroke="#b53a3a" stroke-width="1.1"/>
<rect x="1595.00" y="410.50" width="7.2" height="6.6" rx="1.5" fill="#b53a3a"/><line x1="1598.60" y1="407.80" x2="1598.60" y2="419.80" stroke="#b53a3a" stroke-width="1.1"/>
<rect x="1595.00" y="496.30" width="7.2" height="6.6" rx="1.5" fill="#b53a3a"/><line x1="1598.60" y1="493.60" x2="1598.60" y2="505.60" stroke="#b53a3a" stroke-width="1.1"/>
<rect x="1611.80" y="410.50" width="7.2" height="6.6" rx="1.5" fill="#b53a3a"/><line x1="1615.40" y1="407.80" x2="1615.40" y2="419.80" stroke="#b53a3a" stroke-width="1.1"/>
<rect x="1611.80" y="496.30" width="7.2" height="6.6" rx="1.5" fill="#b53a3a"/><line x1="1615.40" y1="493.60" x2="1615.40" y2="505.60" stroke="#b53a3a" stroke-width="1.1"/>
<circle cx="1581.60" cy="432.00" r="4.0" fill="#c03a3a"/><path d="M1575.60,432.00 H1587.60 M1581.60,426.00 V438.00" stroke="#c03a3a" stroke-width="1.3"/>
<circle cx="1581.60" cy="448.40" r="4.0" fill="#c03a3a"/><path d="M1575.60,448.40 H1587.60 M1581.60,442.40 V454.40" stroke="#c03a3a" stroke-width="1.3"/>
<circle cx="1581.60" cy="465.00" r="4.0" fill="#c03a3a"/><path d="M1575.60,465.00 H1587.60 M1581.60,459.00 V471.00" stroke="#c03a3a" stroke-width="1.3"/>
<circle cx="1581.60" cy="481.50" r="4.0" fill="#c03a3a"/><path d="M1575.60,481.50 H1587.60 M1581.60,475.50 V487.50" stroke="#c03a3a" stroke-width="1.3"/>
<circle cx="1598.60" cy="432.00" r="4.0" fill="#c03a3a"/><path d="M1592.60,432.00 H1604.60 M1598.60,426.00 V438.00" stroke="#c03a3a" stroke-width="1.3"/>
<circle cx="1598.60" cy="448.40" r="4.0" fill="#c03a3a"/><path d="M1592.60,448.40 H1604.60 M1598.60,442.40 V454.40" stroke="#c03a3a" stroke-width="1.3"/>
<circle cx="1598.60" cy="465.00" r="4.0" fill="#c03a3a"/><path d="M1592.60,465.00 H1604.60 M1598.60,459.00 V471.00" stroke="#c03a3a" stroke-width="1.3"/>
<circle cx="1598.60" cy="481.50" r="4.0" fill="#c03a3a"/><path d="M1592.60,481.50 H1604.60 M1598.60,475.50 V487.50" stroke="#c03a3a" stroke-width="1.3"/>
<line x1="1558.80" y1="432.00" x2="1575.80" y2="432.00" stroke="#ececec" stroke-width="1.4" />
<line x1="1558.80" y1="448.40" x2="1575.80" y2="448.40" stroke="#ececec" stroke-width="1.4" />
<line x1="1558.80" y1="465.00" x2="1575.80" y2="465.00" stroke="#ececec" stroke-width="1.4" />
<line x1="1558.80" y1="481.50" x2="1575.80" y2="481.50" stroke="#ececec" stroke-width="1.4" />
<line x1="1558.80" y1="502.60" x2="1575.80" y2="502.60" stroke="#ececec" stroke-width="1.4" />
<line x1="1563.30" y1="432.00" x2="1563.30" y2="502.60" stroke="#ececec" stroke-width="1.4" />
<text x="1561.30" y="445.00" font-family="Liberation Sans" font-size="6.5" fill="#138c8c" text-anchor="start" transform="rotate(-90 1561.30 445.00)" textLength="6" lengthAdjust="spacingAndGlyphs">40</text>
<text x="1561.30" y="461.00" font-family="Liberation Sans" font-size="6.5" fill="#138c8c" text-anchor="start" transform="rotate(-90 1561.30 461.00)" textLength="6" lengthAdjust="spacingAndGlyphs">40</text>
<text x="1561.30" y="478.00" font-family="Liberation Sans" font-size="6.5" fill="#138c8c" text-anchor="start" transform="rotate(-90 1561.30 478.00)" textLength="6" lengthAdjust="spacingAndGlyphs">40</text>
<text x="1561.30" y="496.00" font-family="Liberation Sans" font-size="6.5" fill="#138c8c" text-anchor="start" transform="rotate(-90 1561.30 496.00)" textLength="6" lengthAdjust="spacingAndGlyphs">50</text>
<line x1="1572.80" y1="457.00" x2="1613.80" y2="457.00" stroke="#ececec" stroke-width="1.8" />
<line x1="1636.80" y1="457.00" x2="1677.80" y2="457.00" stroke="#ececec" stroke-width="1.8" />
<line x1="1700.80" y1="457.00" x2="1741.80" y2="457.00" stroke="#ececec" stroke-width="1.8" />
<line x1="1764.80" y1="457.00" x2="1800.00" y2="457.00" stroke="#ececec" stroke-width="1.8" />
<line x1="1701.70" y1="411.00" x2="1701.70" y2="415.00" stroke="#e81010" stroke-width="3.2" />
<line x1="1701.70" y1="419.00" x2="1701.70" y2="423.00" stroke="#e81010" stroke-width="3.2" />
<line x1="1701.70" y1="427.00" x2="1701.70" y2="431.00" stroke="#e81010" stroke-width="3.2" />
<line x1="1701.70" y1="435.00" x2="1701.70" y2="439.00" stroke="#e81010" stroke-width="3.2" />
<line x1="1701.70" y1="443.00" x2="1701.70" y2="447.00" stroke="#e81010" stroke-width="3.2" />
<line x1="1701.70" y1="451.00" x2="1701.70" y2="455.00" stroke="#e81010" stroke-width="3.2" />
<line x1="1701.70" y1="459.00" x2="1701.70" y2="463.00" stroke="#e81010" stroke-width="3.2" />
<line x1="1701.70" y1="467.00" x2="1701.70" y2="471.00" stroke="#e81010" stroke-width="3.2" />
<line x1="1701.70" y1="475.00" x2="1701.70" y2="479.00" stroke="#e81010" stroke-width="3.2" />
<line x1="1701.70" y1="483.00" x2="1701.70" y2="487.00" stroke="#e81010" stroke-width="3.2" />
<line x1="1701.70" y1="491.00" x2="1701.70" y2="495.00" stroke="#e81010" stroke-width="3.2" />
<line x1="1701.70" y1="499.00" x2="1701.70" y2="503.00" stroke="#e81010" stroke-width="3.2" />
<text x="1701.70" y="510.60" font-family="Liberation Sans" font-size="7.5" fill="#138c8c" text-anchor="middle" textLength="28" lengthAdjust="spacingAndGlyphs">B70 IPN220</text>
<text x="1701.70" y="526.60" font-family="Liberation Sans" font-size="10" fill="#12901c" text-anchor="middle" textLength="19.6" lengthAdjust="spacingAndGlyphs">1:5 Ön</text>
<rect x="1582.1" y="474.5" width="16" height="5.8" rx="1" fill="#000" stroke="#ececec" stroke-width="1.2"/>
<line x1="1584.60" y1="477.40" x2="1595.60" y2="477.40" stroke="#138c8c" stroke-width="2.5" />
<line x1="1573.90" y1="616.10" x2="1800.00" y2="616.10" stroke="#ececec" stroke-width="1.4" />
<line x1="1573.90" y1="586.70" x2="1573.90" y2="620.10" stroke="#ececec" stroke-width="1.5" />
<line x1="1582.00" y1="574.70" x2="1582.00" y2="626.10" stroke="#ececec" stroke-width="1.5" />
<line x1="1598.40" y1="574.70" x2="1598.40" y2="626.10" stroke="#ececec" stroke-width="1.5" />
<line x1="1615.00" y1="574.70" x2="1615.00" y2="626.10" stroke="#ececec" stroke-width="1.5" />
<text x="1701.60" y="614.60" font-family="Liberation Sans" font-size="7" fill="#138c8c" text-anchor="middle" textLength="11" lengthAdjust="spacingAndGlyphs">2260</text>
<text x="1580.50" y="625.10" font-family="Liberation Sans" font-size="6.5" fill="#138c8c" text-anchor="start" transform="rotate(-90 1580.50 625.10)" textLength="7" lengthAdjust="spacingAndGlyphs">20</text>
<text x="1596.90" y="625.10" font-family="Liberation Sans" font-size="6.5" fill="#138c8c" text-anchor="start" transform="rotate(-90 1596.90 625.10)" textLength="7" lengthAdjust="spacingAndGlyphs">60</text>
<text x="1613.50" y="626.10" font-family="Liberation Sans" font-size="6.5" fill="#138c8c" text-anchor="start" transform="rotate(-90 1613.50 626.10)" textLength="10" lengthAdjust="spacingAndGlyphs">100</text>
<text x="1580.00" y="614.10" font-family="Liberation Sans" font-size="6.5" fill="#138c8c" text-anchor="start" textLength="6" lengthAdjust="spacingAndGlyphs">20</text>
<text x="1589.00" y="614.10" font-family="Liberation Sans" font-size="6.5" fill="#138c8c" text-anchor="start" textLength="6" lengthAdjust="spacingAndGlyphs">40</text>
<text x="1605.40" y="614.10" font-family="Liberation Sans" font-size="6.5" fill="#138c8c" text-anchor="start" textLength="6" lengthAdjust="spacingAndGlyphs">40</text>
<rect x="1573.9" y="544.4" width="226.0999999999999" height="40.299999999999955" fill="none" stroke="#5580bd" stroke-width="1.7"/>
<line x1="1573.90" y1="564.50" x2="1800.00" y2="564.50" stroke="#ececec" stroke-width="1.5" />
<rect x="1599.40" y="562.90" width="37.20" height="3.2" fill="#000" stroke="#ececec" stroke-width="1.2"/>
<rect x="1660.00" y="562.90" width="40.40" height="3.2" fill="#000" stroke="#ececec" stroke-width="1.2"/>
<rect x="1660.00" y="562.90" width="17.90" height="3.2" fill="#ececec"/>
<rect x="1724.30" y="562.90" width="39.90" height="3.2" fill="#000" stroke="#ececec" stroke-width="1.2"/>
<rect x="1724.30" y="562.90" width="17.30" height="3.2" fill="#ececec"/>
<circle cx="1582.00" cy="554.20" r="4.0" fill="#c03a3a"/><path d="M1576.00,554.20 H1588.00 M1582.00,548.20 V560.20" stroke="#c03a3a" stroke-width="1.3"/>
<circle cx="1582.00" cy="574.90" r="4.0" fill="#c03a3a"/><path d="M1576.00,574.90 H1588.00 M1582.00,568.90 V580.90" stroke="#c03a3a" stroke-width="1.3"/>
<circle cx="1598.40" cy="554.20" r="4.0" fill="#c03a3a"/><path d="M1592.40,554.20 H1604.40 M1598.40,548.20 V560.20" stroke="#c03a3a" stroke-width="1.3"/>
<circle cx="1598.40" cy="574.90" r="4.0" fill="#c03a3a"/><path d="M1592.40,574.90 H1604.40 M1598.40,568.90 V580.90" stroke="#c03a3a" stroke-width="1.3"/>
<circle cx="1615.00" cy="554.20" r="4.0" fill="#c03a3a"/><path d="M1609.00,554.20 H1621.00 M1615.00,548.20 V560.20" stroke="#c03a3a" stroke-width="1.3"/>
<circle cx="1615.00" cy="574.90" r="4.0" fill="#c03a3a"/><path d="M1609.00,574.90 H1621.00 M1615.00,568.90 V580.90" stroke="#c03a3a" stroke-width="1.3"/>
<circle cx="1582" cy="564.5" r="3" fill="#000" stroke="#ececec" stroke-width="1.2"/>
<line x1="1582.00" y1="560.50" x2="1582.00" y2="568.50" stroke="#ececec" stroke-width="1.5" />
<circle cx="1598.4" cy="564.5" r="3" fill="#000" stroke="#ececec" stroke-width="1.2"/>
<line x1="1598.40" y1="560.50" x2="1598.40" y2="568.50" stroke="#ececec" stroke-width="1.5" />
<line x1="1559.90" y1="554.20" x2="1576.90" y2="554.20" stroke="#ececec" stroke-width="1.4" />
<line x1="1559.90" y1="574.90" x2="1576.90" y2="574.90" stroke="#ececec" stroke-width="1.4" />
<line x1="1559.90" y1="584.70" x2="1576.90" y2="584.70" stroke="#ececec" stroke-width="1.4" />
<line x1="1563.90" y1="554.20" x2="1563.90" y2="584.70" stroke="#ececec" stroke-width="1.4" />
<text x="1562.40" y="568.40" font-family="Liberation Sans" font-size="6.5" fill="#138c8c" text-anchor="start" transform="rotate(-90 1562.40 568.40)" textLength="6" lengthAdjust="spacingAndGlyphs">50</text>
<text x="1562.40" y="583.40" font-family="Liberation Sans" font-size="6.5" fill="#138c8c" text-anchor="start" transform="rotate(-90 1562.40 583.40)" textLength="6" lengthAdjust="spacingAndGlyphs">24</text>
<line x1="1701.60" y1="542.00" x2="1701.60" y2="546.00" stroke="#e81010" stroke-width="3.2" />
<line x1="1701.60" y1="550.00" x2="1701.60" y2="554.00" stroke="#e81010" stroke-width="3.2" />
<line x1="1701.60" y1="558.00" x2="1701.60" y2="562.00" stroke="#e81010" stroke-width="3.2" />
<line x1="1701.60" y1="566.00" x2="1701.60" y2="570.00" stroke="#e81010" stroke-width="3.2" />
<line x1="1701.60" y1="574.00" x2="1701.60" y2="578.00" stroke="#e81010" stroke-width="3.2" />
<line x1="1701.60" y1="582.00" x2="1701.60" y2="586.00" stroke="#e81010" stroke-width="3.2" />
<text x="1701.60" y="646.20" font-family="Liberation Sans" font-size="10" fill="#12901c" text-anchor="middle" textLength="20" lengthAdjust="spacingAndGlyphs">1:5 Üst</text>
<rect x="1582" y="545.0" width="16.5" height="5.8" rx="1" fill="#000" stroke="#ececec" stroke-width="1.2"/>
<line x1="1585.00" y1="547.90" x2="1595.50" y2="547.90" stroke="#138c8c" stroke-width="2.5" />
<line x1="1573.90" y1="683.60" x2="1800.00" y2="683.60" stroke="#ececec" stroke-width="1.4" />
<line x1="1573.90" y1="679.60" x2="1573.90" y2="711.60" stroke="#ececec" stroke-width="1.5" />
<line x1="1582.00" y1="669.60" x2="1582.00" y2="725.00" stroke="#ececec" stroke-width="1.5" />
<line x1="1598.40" y1="669.60" x2="1598.40" y2="725.00" stroke="#ececec" stroke-width="1.5" />
<line x1="1615.00" y1="669.60" x2="1615.00" y2="725.00" stroke="#ececec" stroke-width="1.5" />
<text x="1701.60" y="682.10" font-family="Liberation Sans" font-size="7" fill="#138c8c" text-anchor="middle" textLength="11" lengthAdjust="spacingAndGlyphs">2260</text>
<text x="1572.90" y="682.60" font-family="Liberation Sans" font-size="6.5" fill="#138c8c" text-anchor="start" transform="rotate(-90 1572.90 682.60)" textLength="4" lengthAdjust="spacingAndGlyphs">0</text>
<text x="1580.50" y="682.60" font-family="Liberation Sans" font-size="6.5" fill="#138c8c" text-anchor="start" transform="rotate(-90 1580.50 682.60)" textLength="8" lengthAdjust="spacingAndGlyphs">20</text>
<text x="1580.50" y="673.60" font-family="Liberation Sans" font-size="6.5" fill="#138c8c" text-anchor="start" transform="rotate(-90 1580.50 673.60)" textLength="7" lengthAdjust="spacingAndGlyphs">20</text>
<text x="1590.00" y="682.60" font-family="Liberation Sans" font-size="6.5" fill="#138c8c" text-anchor="start" transform="rotate(-90 1590.00 682.60)" textLength="6" lengthAdjust="spacingAndGlyphs">40</text>
<text x="1596.90" y="673.60" font-family="Liberation Sans" font-size="6.5" fill="#138c8c" text-anchor="start" transform="rotate(-90 1596.90 673.60)" textLength="7" lengthAdjust="spacingAndGlyphs">60</text>
<text x="1606.40" y="682.60" font-family="Liberation Sans" font-size="6.5" fill="#138c8c" text-anchor="start" transform="rotate(-90 1606.40 682.60)" textLength="6" lengthAdjust="spacingAndGlyphs">40</text>
<text x="1613.50" y="673.60" font-family="Liberation Sans" font-size="6.5" fill="#138c8c" text-anchor="start" transform="rotate(-90 1613.50 673.60)" textLength="10" lengthAdjust="spacingAndGlyphs">100</text>
<rect x="1573.9" y="715" width="226.0999999999999" height="40.299999999999955" fill="none" stroke="#5580bd" stroke-width="1.7"/>
<line x1="1573.90" y1="735.10" x2="1800.00" y2="735.10" stroke="#ececec" stroke-width="1.5" />
<rect x="1599.40" y="733.50" width="37.20" height="3.2" fill="#000" stroke="#ececec" stroke-width="1.2"/>
<rect x="1660.00" y="733.50" width="40.40" height="3.2" fill="#000" stroke="#ececec" stroke-width="1.2"/>
<rect x="1660.00" y="733.50" width="17.90" height="3.2" fill="#ececec"/>
<rect x="1724.30" y="733.50" width="39.90" height="3.2" fill="#000" stroke="#ececec" stroke-width="1.2"/>
<rect x="1724.30" y="733.50" width="17.30" height="3.2" fill="#ececec"/>
<circle cx="1582.00" cy="724.80" r="4.0" fill="#c03a3a"/><path d="M1576.00,724.80 H1588.00 M1582.00,718.80 V730.80" stroke="#c03a3a" stroke-width="1.3"/>
<circle cx="1582.00" cy="745.50" r="4.0" fill="#c03a3a"/><path d="M1576.00,745.50 H1588.00 M1582.00,739.50 V751.50" stroke="#c03a3a" stroke-width="1.3"/>
<circle cx="1598.40" cy="724.80" r="4.0" fill="#c03a3a"/><path d="M1592.40,724.80 H1604.40 M1598.40,718.80 V730.80" stroke="#c03a3a" stroke-width="1.3"/>
<circle cx="1598.40" cy="745.50" r="4.0" fill="#c03a3a"/><path d="M1592.40,745.50 H1604.40 M1598.40,739.50 V751.50" stroke="#c03a3a" stroke-width="1.3"/>
<circle cx="1615.00" cy="724.80" r="4.0" fill="#c03a3a"/><path d="M1609.00,724.80 H1621.00 M1615.00,718.80 V730.80" stroke="#c03a3a" stroke-width="1.3"/>
<circle cx="1615.00" cy="745.50" r="4.0" fill="#c03a3a"/><path d="M1609.00,745.50 H1621.00 M1615.00,739.50 V751.50" stroke="#c03a3a" stroke-width="1.3"/>
<circle cx="1582" cy="735.1" r="3" fill="#000" stroke="#ececec" stroke-width="1.2"/>
<line x1="1582.00" y1="731.10" x2="1582.00" y2="739.10" stroke="#ececec" stroke-width="1.5" />
<circle cx="1598.4" cy="735.1" r="3" fill="#000" stroke="#ececec" stroke-width="1.2"/>
<line x1="1598.40" y1="731.10" x2="1598.40" y2="739.10" stroke="#ececec" stroke-width="1.5" />
<line x1="1559.90" y1="724.80" x2="1576.90" y2="724.80" stroke="#ececec" stroke-width="1.4" />
<line x1="1559.90" y1="745.50" x2="1576.90" y2="745.50" stroke="#ececec" stroke-width="1.4" />
<line x1="1559.90" y1="755.30" x2="1576.90" y2="755.30" stroke="#ececec" stroke-width="1.4" />
<line x1="1563.90" y1="724.80" x2="1563.90" y2="755.30" stroke="#ececec" stroke-width="1.4" />
<text x="1562.40" y="739.00" font-family="Liberation Sans" font-size="6.5" fill="#138c8c" text-anchor="start" transform="rotate(-90 1562.40 739.00)" textLength="6" lengthAdjust="spacingAndGlyphs">50</text>
<text x="1562.40" y="754.00" font-family="Liberation Sans" font-size="6.5" fill="#138c8c" text-anchor="start" transform="rotate(-90 1562.40 754.00)" textLength="6" lengthAdjust="spacingAndGlyphs">24</text>
<line x1="1701.60" y1="713.00" x2="1701.60" y2="717.00" stroke="#e81010" stroke-width="3.2" />
<line x1="1701.60" y1="721.00" x2="1701.60" y2="725.00" stroke="#e81010" stroke-width="3.2" />
<line x1="1701.60" y1="729.00" x2="1701.60" y2="733.00" stroke="#e81010" stroke-width="3.2" />
<line x1="1701.60" y1="737.00" x2="1701.60" y2="741.00" stroke="#e81010" stroke-width="3.2" />
<line x1="1701.60" y1="745.00" x2="1701.60" y2="749.00" stroke="#e81010" stroke-width="3.2" />
<line x1="1701.60" y1="753.00" x2="1701.60" y2="757.00" stroke="#e81010" stroke-width="3.2" />
<text x="1701.60" y="772.80" font-family="Liberation Sans" font-size="10" fill="#12901c" text-anchor="middle" textLength="20" lengthAdjust="spacingAndGlyphs">1:5 Alt</text>
<text x="1701.00" y="791.70" font-family="Liberation Sans" font-size="14" fill="#12901c" text-anchor="middle" textLength="40.5" lengthAdjust="spacingAndGlyphs">BA75 No:1</text>
<line x1="547.00" y1="946.40" x2="987.00" y2="946.40" stroke="#ececec" stroke-width="1.5" />
<line x1="547.00" y1="946.40" x2="547.00" y2="980.00" stroke="#ececec" stroke-width="1.5" />
<line x1="987.00" y1="946.40" x2="987.00" y2="980.00" stroke="#ececec" stroke-width="1.5" />
<line x1="999.00" y1="946.40" x2="1732.00" y2="946.40" stroke="#ececec" stroke-width="1.5" />
<line x1="999.00" y1="946.40" x2="999.00" y2="980.00" stroke="#ececec" stroke-width="1.5" />
<rect x="557.60" y="959.00" width="227.90" height="30.00" rx="0" fill="none" stroke="#ececec" stroke-width="1.5"/>
<line x1="557.60" y1="965.00" x2="785.50" y2="965.00" stroke="#ececec" stroke-width="1.5" />
<line x1="557.60" y1="971.00" x2="785.50" y2="971.00" stroke="#ececec" stroke-width="1.5" />
<line x1="588.60" y1="965.00" x2="588.60" y2="971.00" stroke="#ececec" stroke-width="1.3" />
<line x1="629.60" y1="965.00" x2="629.60" y2="971.00" stroke="#ececec" stroke-width="1.3" />
<line x1="660.80" y1="965.00" x2="660.80" y2="971.00" stroke="#ececec" stroke-width="1.3" />
<line x1="692.40" y1="965.00" x2="692.40" y2="971.00" stroke="#ececec" stroke-width="1.3" />
<line x1="723.40" y1="965.00" x2="723.40" y2="971.00" stroke="#ececec" stroke-width="1.3" />
<line x1="754.70" y1="965.00" x2="754.70" y2="971.00" stroke="#ececec" stroke-width="1.3" />
<text x="559.60" y="964.50" font-family="Liberation Sans" font-size="6" fill="#f4f4f4" text-anchor="start" font-weight="700" textLength="34" lengthAdjust="spacingAndGlyphs">Malzeme Listesi</text>
<text x="559.60" y="970.30" font-family="Liberation Sans" font-size="6" fill="#f4f4f4" text-anchor="start" font-weight="700" textLength="9" lengthAdjust="spacingAndGlyphs">Poz</text>
<text x="590.60" y="970.30" font-family="Liberation Sans" font-size="6" fill="#f4f4f4" text-anchor="start" font-weight="700" textLength="19" lengthAdjust="spacingAndGlyphs">Açıklama</text>
<text x="631.60" y="970.30" font-family="Liberation Sans" font-size="6" fill="#f4f4f4" text-anchor="start" font-weight="700" textLength="19" lengthAdjust="spacingAndGlyphs">Malzeme</text>
<text x="662.80" y="970.30" font-family="Liberation Sans" font-size="6" fill="#f4f4f4" text-anchor="start" font-weight="700" textLength="8" lengthAdjust="spacingAndGlyphs">No</text>
<text x="694.40" y="970.30" font-family="Liberation Sans" font-size="6" fill="#f4f4f4" text-anchor="start" font-weight="700" textLength="18" lengthAdjust="spacingAndGlyphs">Uzunluk</text>
<text x="725.40" y="970.30" font-family="Liberation Sans" font-size="6" fill="#f4f4f4" text-anchor="start" font-weight="700" textLength="10" lengthAdjust="spacingAndGlyphs">Alan</text>
<text x="756.70" y="970.30" font-family="Liberation Sans" font-size="6" fill="#f4f4f4" text-anchor="start" font-weight="700" textLength="15" lengthAdjust="spacingAndGlyphs">Ağırlık</text>
<text x="559.60" y="976.30" font-family="Liberation Sans" font-size="6" fill="#f4f4f4" text-anchor="start" font-weight="700" textLength="30" lengthAdjust="spacingAndGlyphs">BA28 İçin Liste</text>
<rect x="1008.60" y="959.00" width="228.90" height="30.00" rx="0" fill="none" stroke="#ececec" stroke-width="1.5"/>
<line x1="1008.60" y1="965.00" x2="1237.50" y2="965.00" stroke="#ececec" stroke-width="1.5" />
<line x1="1008.60" y1="971.00" x2="1237.50" y2="971.00" stroke="#ececec" stroke-width="1.5" />
<line x1="1039.60" y1="965.00" x2="1039.60" y2="971.00" stroke="#ececec" stroke-width="1.3" />
<line x1="1080.60" y1="965.00" x2="1080.60" y2="971.00" stroke="#ececec" stroke-width="1.3" />
<line x1="1111.80" y1="965.00" x2="1111.80" y2="971.00" stroke="#ececec" stroke-width="1.3" />
<line x1="1143.40" y1="965.00" x2="1143.40" y2="971.00" stroke="#ececec" stroke-width="1.3" />
<line x1="1174.40" y1="965.00" x2="1174.40" y2="971.00" stroke="#ececec" stroke-width="1.3" />
<line x1="1205.70" y1="965.00" x2="1205.70" y2="971.00" stroke="#ececec" stroke-width="1.3" />
<text x="1010.60" y="964.50" font-family="Liberation Sans" font-size="6" fill="#f4f4f4" text-anchor="start" font-weight="700" textLength="34" lengthAdjust="spacingAndGlyphs">Malzeme Listesi</text>
<text x="1010.60" y="970.30" font-family="Liberation Sans" font-size="6" fill="#f4f4f4" text-anchor="start" font-weight="700" textLength="9" lengthAdjust="spacingAndGlyphs">Poz</text>
<text x="1041.60" y="970.30" font-family="Liberation Sans" font-size="6" fill="#f4f4f4" text-anchor="start" font-weight="700" textLength="19" lengthAdjust="spacingAndGlyphs">Açıklama</text>
<text x="1082.60" y="970.30" font-family="Liberation Sans" font-size="6" fill="#f4f4f4" text-anchor="start" font-weight="700" textLength="19" lengthAdjust="spacingAndGlyphs">Malzeme</text>
<text x="1113.80" y="970.30" font-family="Liberation Sans" font-size="6" fill="#f4f4f4" text-anchor="start" font-weight="700" textLength="8" lengthAdjust="spacingAndGlyphs">No</text>
<text x="1145.40" y="970.30" font-family="Liberation Sans" font-size="6" fill="#f4f4f4" text-anchor="start" font-weight="700" textLength="18" lengthAdjust="spacingAndGlyphs">Uzunluk</text>
<text x="1176.40" y="970.30" font-family="Liberation Sans" font-size="6" fill="#f4f4f4" text-anchor="start" font-weight="700" textLength="10" lengthAdjust="spacingAndGlyphs">Alan</text>
<text x="1207.70" y="970.30" font-family="Liberation Sans" font-size="6" fill="#f4f4f4" text-anchor="start" font-weight="700" textLength="15" lengthAdjust="spacingAndGlyphs">Ağırlık</text>
<text x="1010.60" y="976.30" font-family="Liberation Sans" font-size="6" fill="#f4f4f4" text-anchor="start" font-weight="700" textLength="30" lengthAdjust="spacingAndGlyphs">BA28 İçin Liste</text>
</g></svg>
<svg class="a" style="left:0;top:0" width="1732" height="215" viewBox="0 0 1732 215">
<rect x="8" y="8" width="16" height="16" rx="4" fill="#c26c6e"/>
<text x="16" y="21.3" font-family="Liberation Sans" font-size="14" fill="#fff" text-anchor="middle">S</text>
<path d="M40.2,9.9 H42.2 V15.2 H49.8 V9.9 H51.8 V21.8 H40.2 Z M42.2,17 V19.8 H49.8 V17 Z" fill="#2b2b2b" fill-rule="evenodd"/><rect x="43" y="9.9" width="4.8" height="4" fill="#2b2b2b"/><rect x="43.8" y="10.6" width="1.5" height="2.6" fill="#f0f0f0"/>
<path d="M68,10 H72.6 L73.4,11.8 H80 V14.2 H71.2 L68,20.8 Z" fill="#edac62"/><path d="M71,15 H83 L80.8,20.8 H68.8 Z" fill="#e8922c"/>
<path d="M98.9,9.9 H104.6 L108.3,13.6 V21 H98.9 Z" fill="none" stroke="#2b2b2b" stroke-width="1.6" stroke-linejoin="round"/><path d="M104.2,9.5 L108.8,14.1 H104.2 Z" fill="#2b2b2b"/>
<line x1="121" y1="5" x2="121" y2="27" stroke="#f1f1f1" stroke-width="1"/>
<path d="M131,15 L137,10 V13 C142,13 146,15 147,20 C144,17 141,17 137,17 V20 Z" fill="#9ccbf0"/>
<path d="M157,14.5 L161.3,18.5 L165.6,14.5" fill="none" stroke="#c9c9c9" stroke-width="1"/>
<path d="M191.7,15 L185.7,10 V13 C180.7,13 176.7,15 175.7,20 C178.7,17 181.7,17 185.7,17 V20 Z" fill="#9ccbf0"/>
<rect x="209" y="12.9" width="8.5" height="1.5" fill="#111"/><path d="M209,15.5 H217.5 L213.25,19.4 Z" fill="#111"/>
<circle cx="1500" cy="16" r="11.4" fill="#80c196"/>
<text x="1500" y="21.6" font-family="Liberation Sans" font-weight="700" font-size="15" fill="#fff" text-anchor="middle">?</text>
<circle cx="1539.5" cy="15.7" r="11.5" fill="#6fc185"/>
<text x="1539.5" y="20.6" font-family="Liberation Sans" font-size="13" fill="#fff" text-anchor="middle">S</text>
<circle cx="1591.5" cy="15.3" r="4.6" fill="none" stroke="#6a6a6a" stroke-width="1.1"/><line x1="1588.2" y1="18.6" x2="1585.3" y2="21.5" stroke="#6a6a6a" stroke-width="1.2"/>
<line x1="266.6" y1="70" x2="266.6" y2="139" stroke="#d6d6d6" stroke-width="1"/>
<line x1="456.6" y1="70" x2="456.6" y2="139" stroke="#d6d6d6" stroke-width="1"/>
<line x1="541.4" y1="70" x2="541.4" y2="139" stroke="#d6d6d6" stroke-width="1"/>
<line x1="694.5" y1="70" x2="694.5" y2="139" stroke="#d6d6d6" stroke-width="1"/>
<line x1="783.6" y1="70" x2="783.6" y2="139" stroke="#d6d6d6" stroke-width="1"/>
<line x1="905.4" y1="70" x2="905.4" y2="139" stroke="#d6d6d6" stroke-width="1"/>
<line x1="1014" y1="70" x2="1014" y2="139" stroke="#d6d6d6" stroke-width="1"/>
<path d="M42.03,88.57 L46.04,89.88 L46.04,94.12 L42.03,95.43 L41.52,96.66 L43.43,100.43 L40.43,103.43 L36.66,101.52 L35.43,102.03 L34.12,106.04 L29.88,106.04 L28.57,102.03 L27.34,101.52 L23.57,103.43 L20.57,100.43 L22.48,96.66 L21.97,95.43 L17.96,94.12 L17.96,89.88 L21.97,88.57 L22.48,87.34 L20.57,83.57 L23.57,80.57 L27.34,82.48 L28.57,81.97 L29.88,77.96 L34.12,77.96 L35.43,81.97 L36.66,82.48 L40.43,80.57 L43.43,83.57 L41.52,87.34Z M36.20,92.00 A4.2,4.2 0 1,0 27.80,92.00 A4.2,4.2 0 1,0 36.20,92.00Z" fill="#0a74d6" fill-rule="evenodd" transform="rotate(-90 32 92)"/>
<path d="M111,90.6 V81.1 H87.2 V96.8 H104.8" fill="none" stroke="#2b2b2b" stroke-width="1.9" stroke-linejoin="round"/><text x="99" y="93.9" font-family="Liberation Sans" font-weight="700" font-size="13.4" fill="#2b2b2b" text-anchor="middle" textLength="18" lengthAdjust="spacingAndGlyphs">AB</text><path d="M101.9,105.9 V102.2 L105.4,105.9 Z" fill="#0a74d6"/><path d="M103.3,100.7 L110.9,93.4 L114.6,96.8 L106.9,104.8 Z" fill="#0a74d6"/><path d="M112.3,91.6 L114.4,90.1 L117.9,93.4 L116.1,95.6 Z" fill="#0a74d6"/>
<rect x="165" y="81" width="22" height="2" rx="1" fill="#333"/><path d="M173,81 V79.5 A3,2 0 0 1 179,79.5 V81" fill="none" stroke="#333" stroke-width="0.9"/><path d="M167,84 H185 V103 A3,3 0 0 1 182,106 H170 A3,3 0 0 1 167,103 Z" fill="#333"/><rect x="169.8" y="87" width="2.4" height="16" rx="0.8" fill="#fff"/><rect x="174.9" y="87" width="2.4" height="16" rx="0.8" fill="#fff"/><rect x="179.9" y="87" width="2.4" height="16" rx="0.8" fill="#fff"/>
<path d="M223,79 H246 V102" fill="none" stroke="#333" stroke-width="1.9"/><path d="M219,82 H243 V106 H219 Z" fill="#333"/><rect x="223" y="82" width="16" height="9.5" fill="#fff"/><rect x="225" y="82" width="8" height="8" fill="#333"/><rect x="226.8" y="83.8" width="2.2" height="4" fill="#fff"/><rect x="223" y="95.5" width="16" height="6.5" fill="#fff"/>
<path d="M295.10,76.80 L308.60,83.70 L295.10,90.60 L281.60,83.70Z" fill="#fff" stroke="#383838" stroke-width="1.5" stroke-linejoin="round"/><path d="M281.60,83.70 L295.10,90.60 L295.10,107.60 L281.60,100.70Z" fill="#383838" stroke="#383838" stroke-width="1.5" stroke-linejoin="round"/><path d="M295.10,90.60 L308.60,83.70 L308.60,100.70 L295.10,107.60Z" fill="#fff" stroke="#383838" stroke-width="1.5" stroke-linejoin="round"/>
<path d="M351.80,76.80 L359.30,80.70 L351.80,84.60 L344.30,80.70Z" fill="#fff" stroke="#383838" stroke-width="1.1" stroke-linejoin="round"/><path d="M344.30,80.70 L351.80,84.60 L351.80,94.40 L344.30,90.50Z" fill="#383838" stroke="#383838" stroke-width="1.1" stroke-linejoin="round"/><path d="M351.80,84.60 L359.30,80.70 L359.30,90.50 L351.80,94.40Z" fill="#fff" stroke="#383838" stroke-width="1.1" stroke-linejoin="round"/>
<path d="M344.30,90.60 L351.80,94.50 L344.30,98.40 L336.80,94.50Z" fill="#fff" stroke="#383838" stroke-width="1.1" stroke-linejoin="round"/><path d="M336.80,94.50 L344.30,98.40 L344.30,108.20 L336.80,104.30Z" fill="#383838" stroke="#383838" stroke-width="1.1" stroke-linejoin="round"/><path d="M344.30,98.40 L351.80,94.50 L351.80,104.30 L344.30,108.20Z" fill="#fff" stroke="#383838" stroke-width="1.1" stroke-linejoin="round"/>
<path d="M359.30,90.60 L366.80,94.50 L359.30,98.40 L351.80,94.50Z" fill="#fff" stroke="#383838" stroke-width="1.1" stroke-linejoin="round"/><path d="M351.80,94.50 L359.30,98.40 L359.30,108.20 L351.80,104.30Z" fill="#383838" stroke="#383838" stroke-width="1.1" stroke-linejoin="round"/><path d="M359.30,98.40 L366.80,94.50 L366.80,104.30 L359.30,108.20Z" fill="#fff" stroke="#383838" stroke-width="1.1" stroke-linejoin="round"/>
<path d="M417.60,76.80 L425.10,80.70 L417.60,84.60 L410.10,80.70Z" fill="#fff" stroke="#383838" stroke-width="1.1" stroke-linejoin="round"/><path d="M410.10,80.70 L417.60,84.60 L417.60,94.40 L410.10,90.50Z" fill="#383838" stroke="#383838" stroke-width="1.1" stroke-linejoin="round"/><path d="M417.60,84.60 L425.10,80.70 L425.10,90.50 L417.60,94.40Z" fill="#fff" stroke="#383838" stroke-width="1.1" stroke-linejoin="round"/>
<path d="M410.10,90.60 L417.60,94.50 L410.10,98.40 L402.60,94.50Z" fill="#fff" stroke="#383838" stroke-width="1.1" stroke-linejoin="round"/><path d="M402.60,94.50 L410.10,98.40 L410.10,108.20 L402.60,104.30Z" fill="#383838" stroke="#383838" stroke-width="1.1" stroke-linejoin="round"/><path d="M410.10,98.40 L417.60,94.50 L417.60,104.30 L410.10,108.20Z" fill="#fff" stroke="#383838" stroke-width="1.1" stroke-linejoin="round"/>
<path d="M425.10,90.60 L432.60,94.50 L425.10,98.40 L417.60,94.50Z" fill="#fff" stroke="#383838" stroke-width="1.1" stroke-linejoin="round"/><path d="M417.60,94.50 L425.10,98.40 L425.10,108.20 L417.60,104.30Z" fill="#383838" stroke="#383838" stroke-width="1.1" stroke-linejoin="round"/><path d="M425.10,98.40 L432.60,94.50 L432.60,104.30 L425.10,108.20Z" fill="#fff" stroke="#383838" stroke-width="1.1" stroke-linejoin="round"/>
<rect x="482.5" y="81.5" width="31" height="21" fill="#fff" stroke="#7a7a7a" stroke-width="0.9"/><line x1="482" y1="102.3" x2="514" y2="102.3" stroke="#555" stroke-width="1.5"/><line x1="484.8" y1="82.5" x2="484.8" y2="99.5" stroke="#9a9a9a" stroke-width="0.8"/><line x1="483" y1="100.6" x2="513" y2="100.6" stroke="#b0b0b0" stroke-width="0.8"/><text x="502.3" y="99.4" font-family="Liberation Sans" font-size="8.5" fill="#666" textLength="10.5" lengthAdjust="spacingAndGlyphs">A3</text>
<rect x="553.7" y="81.5" width="31" height="21" fill="#fff" stroke="#7a7a7a" stroke-width="0.9"/><line x1="553.2" y1="102.3" x2="585.2" y2="102.3" stroke="#555" stroke-width="1.5"/><line x1="556.0" y1="82.5" x2="556.0" y2="99.5" stroke="#9a9a9a" stroke-width="0.8"/><line x1="554.2" y1="100.6" x2="584.2" y2="100.6" stroke="#b0b0b0" stroke-width="0.8"/><text x="573.5" y="99.4" font-family="Liberation Sans" font-size="8.5" fill="#666" textLength="10.5" lengthAdjust="spacingAndGlyphs">A3</text><path d="M566.20,84.30 L573.20,88.00 L566.20,91.70 L559.20,88.00Z" fill="#fff" stroke="#383838" stroke-width="1.0" stroke-linejoin="round"/><path d="M559.20,88.00 L566.20,91.70 L566.20,100.00 L559.20,96.30Z" fill="#383838" stroke="#383838" stroke-width="1.0" stroke-linejoin="round"/><path d="M566.20,91.70 L573.20,88.00 L573.20,96.30 L566.20,100.00Z" fill="#fff" stroke="#383838" stroke-width="1.0" stroke-linejoin="round"/>
<rect x="602.7" y="81.5" width="31" height="21" fill="#fff" stroke="#7a7a7a" stroke-width="0.9"/><line x1="602.2" y1="102.3" x2="634.2" y2="102.3" stroke="#555" stroke-width="1.5"/><line x1="605.0" y1="82.5" x2="605.0" y2="99.5" stroke="#9a9a9a" stroke-width="0.8"/><line x1="603.2" y1="100.6" x2="633.2" y2="100.6" stroke="#b0b0b0" stroke-width="0.8"/><text x="622.5" y="99.4" font-family="Liberation Sans" font-size="8.5" fill="#666" textLength="10.5" lengthAdjust="spacingAndGlyphs">A3</text><path d="M614.50,83.20 L618.40,85.20 L614.50,87.20 L610.60,85.20Z" fill="#fff" stroke="#383838" stroke-width="0.8" stroke-linejoin="round"/><path d="M610.60,85.20 L614.50,87.20 L614.50,92.10 L610.60,90.10Z" fill="#383838" stroke="#383838" stroke-width="0.8" stroke-linejoin="round"/><path d="M614.50,87.20 L618.40,85.20 L618.40,90.10 L614.50,92.10Z" fill="#fff" stroke="#383838" stroke-width="0.8" stroke-linejoin="round"/><path d="M610.60,90.30 L614.50,92.30 L610.60,94.30 L606.70,92.30Z" fill="#fff" stroke="#383838" stroke-width="0.8" stroke-linejoin="round"/><path d="M606.70,92.30 L610.60,94.30 L610.60,99.20 L606.70,97.20Z" fill="#383838" stroke="#383838" stroke-width="0.8" stroke-linejoin="round"/><path d="M610.60,94.30 L614.50,92.30 L614.50,97.20 L610.60,99.20Z" fill="#fff" stroke="#383838" stroke-width="0.8" stroke-linejoin="round"/><path d="M618.40,90.30 L622.30,92.30 L618.40,94.30 L614.50,92.30Z" fill="#fff" stroke="#383838" stroke-width="0.8" stroke-linejoin="round"/><path d="M614.50,92.30 L618.40,94.30 L618.40,99.20 L614.50,97.20Z" fill="#383838" stroke="#383838" stroke-width="0.8" stroke-linejoin="round"/><path d="M618.40,94.30 L622.30,92.30 L622.30,97.20 L618.40,99.20Z" fill="#fff" stroke="#383838" stroke-width="0.8" stroke-linejoin="round"/>
<rect x="651.7" y="81.5" width="31" height="21" fill="#fff" stroke="#7a7a7a" stroke-width="0.9"/><line x1="651.2" y1="102.3" x2="683.2" y2="102.3" stroke="#555" stroke-width="1.5"/><line x1="654.0" y1="82.5" x2="654.0" y2="99.5" stroke="#9a9a9a" stroke-width="0.8"/><line x1="652.2" y1="100.6" x2="682.2" y2="100.6" stroke="#b0b0b0" stroke-width="0.8"/><text x="671.5" y="99.4" font-family="Liberation Sans" font-size="8.5" fill="#666" textLength="10.5" lengthAdjust="spacingAndGlyphs">A3</text>
<rect x="725.1" y="82.8" width="27.9" height="17.4" rx="1" fill="none" stroke="#5585c4" stroke-width="3.6"/><line x1="738.8" y1="83" x2="738.8" y2="99" stroke="#5f8fcc" stroke-width="3.6"/><path d="M725.8,84.6 L739,98.6 L751.6,84.6" fill="none" stroke="#6895d0" stroke-width="3.7" stroke-linejoin="round"/>
<defs><linearGradient id="tg1" x1="0" y1="0" x2="1" y2="0.3"><stop offset="0" stop-color="#a9bcd2"/><stop offset="1" stop-color="#e8eef6"/></linearGradient><linearGradient id="tg2" x1="0" y1="0" x2="1" y2="0"><stop offset="0" stop-color="#5c7596"/><stop offset="1" stop-color="#8ea5c3"/></linearGradient></defs>
<path d="M796.3,96.3 L806,90.6 L817.5,89 L828,94.8 L819.6,99.6 L811,93.6 Z" fill="#8098b8"/><path d="M796.3,96.3 L811,93.6 L819.6,99.6 V107.2 L796.3,104.4 Z" fill="url(#tg1)"/><path d="M819.6,99.6 L828,94.8 V101.8 L819.6,107.2 Z" fill="#5f7696"/><path d="M796.3,96.3 L806,90.6" stroke="#3a4a60" stroke-width="0.8"/><path d="M806,78 H817.5 V92.5 L812,93.8 L806,92.5 Z" fill="#9fb4cf"/><rect x="809" y="78.5" width="3.6" height="15" fill="#6d84a4"/>
<rect x="856.1" y="78.5" width="7.5" height="9" fill="#d6d8d8"/><rect x="875.4" y="79.2" width="8" height="8.4" fill="#d6d8d8"/><rect x="856.1" y="95.2" width="7.5" height="8.4" fill="#d6d8d8"/><rect x="875.4" y="95.2" width="8" height="8.4" fill="#d6d8d8"/>
<path d="M856.1,78.7 H863.3 V87.1 H856.1 M875.8,79.1 V87.1 H883.1 V79.1 M856.1,95.7 H863.3 V103.6 M876.2,103.1 H883.1 V95.2" fill="none" stroke="#111" stroke-width="1.2"/>
<path d="M854,83.4 H886 M854,99.4 H886 M860.5,76 V108 M879.4,76 V108" stroke="#d04040" stroke-width="1.2" stroke-dasharray="2.6,1.5"/>
<path d="M943.47,81.50 A14,14 0 0,0 923.70,101.27 L929.79,95.78 A5.8,5.8 0 0,1 937.98,87.59Z" fill="#e84646"/>
<path d="M944.50,101.27 A14,14 0 0,0 944.50,82.53 L938.41,88.02 A5.8,5.8 0 0,1 938.41,95.78Z" fill="#1178d6"/>
<path d="M925.48,102.93 A14,14 0 0,0 942.72,102.93 L937.67,96.47 A5.8,5.8 0 0,1 930.53,96.47Z" fill="#e89935"/>
<path d="M994,83.6 V79 H974.2 V104.7 H994 V98.4" fill="none" stroke="#333" stroke-width="2.1" stroke-linejoin="round"/><path d="M983.1,102 V97.4 L987.6,102 Z" fill="#0a74d6"/><path d="M984.3,95.9 L992.8,87.2 L997.8,92.1 L989.1,100.7 Z" fill="#0a74d6"/><path d="M994.3,85.8 L996.3,83.9 L1001.1,88.5 L999.1,90.7 Z" fill="#0a74d6"/>
<path d="M110.3,131.3 L114.3,135.3 L118.3,131.3" fill="none" stroke="#333" stroke-width="1"/>
<path d="M582.6,131.3 L586.6,135.3 L590.6,131.3" fill="none" stroke="#333" stroke-width="1"/>
<path d="M631.5,131.3 L635.5,135.3 L639.5,131.3" fill="none" stroke="#333" stroke-width="1"/>
<path d="M680.5,131.3 L684.5,135.3 L688.5,131.3" fill="none" stroke="#333" stroke-width="1"/>
<path d="M948,131.3 L952,135.3 L956,131.3" fill="none" stroke="#333" stroke-width="1"/>
<path d="M28,188 L23.2,195.5 L26.2,195 Z" fill="#666"/><path d="M28,188 L32.5,194.5" stroke="#777" stroke-width="0.9"/><path d="M34.6,198 A4.6,4.6 0 1 1 28.5,194.5" fill="none" stroke="#5a5a5a" stroke-width="1.2"/><path d="M32.3,192.8 L36.6,190.6 L40.7,192.8 V198.3 L36.6,200.5 L32.3,198.3 Z M32.3,192.8 L36.6,195 L40.7,192.8 M36.6,195 V200.5" fill="#fafafa" stroke="#6a6a6a" stroke-width="0.9" stroke-linejoin="round"/>
<path d="M110.6,199.6 L113.4,196.8 M111.3,194.2 L116,198.9 M112.6,192.6 L117.6,197.6 M114.2,192 L118.2,196 M111.2,196.5 L114,193.7" stroke="#8a8a8a" stroke-width="0.9"/>
<path d="M125.5,191.3 L135,200.8 M135,191.3 L125.5,200.8" stroke="#777" stroke-width="1"/>
<path d="M154.5,189 V203.5 H157.5 V189 Z M160,189 L171.5,203.5 H160 Z M163,197 V200.5 H166 Z" fill="none" stroke="#666" stroke-width="0.9"/>
</svg>
<span class="t" style="left:874.0px;top:11.14px;font-size:12px;font-weight:400;color:#1a1a1a;transform:scaleX(0.9518)">STASteel 3.1.16 -son12.steel4cad</span><span class="t" style="left:714.8px;top:11.14px;font-size:12px;font-weight:400;color:#1a1a1a;transform:scaleX(0.9533)">Çizim</span><span class="t" style="left:1613.6px;top:10.94px;font-size:12px;font-weight:400;color:#5f5f5f;transform:scaleX(0.9535)">Arama</span><span class="t" style="left:17.6px;top:42.84px;font-size:12px;font-weight:400;color:#1a1a1a;transform:scaleX(0.9231)">Dosya</span><span class="t" style="left:78.5px;top:41.84px;font-size:12px;font-weight:400;color:#1a1a1a;transform:scaleX(0.9203)">Yapı</span><span class="t" style="left:129.0px;top:41.84px;font-size:12px;font-weight:400;color:#1a1a1a;transform:scaleX(0.9680)">Araçlar</span><span class="t" style="left:194.3px;top:41.84px;font-size:12px;font-weight:400;color:#1a1a1a;transform:scaleX(0.9712)">Birleşimler</span><span class="t" style="left:277.2px;top:41.84px;font-size:12px;font-weight:400;color:#1a1a1a;transform:scaleX(0.9707)">Tasarım Ve Analiz</span><span class="t" style="left:397.8px;top:41.84px;font-size:12px;font-weight:700;color:#1a1a1a;transform:scaleX(0.9954)">Çizim&amp;Rapor</span><span class="t" style="left:500.9px;top:41.84px;font-size:12px;font-weight:400;color:#1a1a1a;transform:scaleX(0.9861)">Çizim-Eski Modül</span><span class="t" style="left:621.5px;top:41.84px;font-size:12px;font-weight:400;color:#1a1a1a;transform:scaleX(0.9607)">Düzenle</span><span class="t" style="left:692.0px;top:41.84px;font-size:12px;font-weight:400;color:#1a1a1a;transform:scaleX(0.9669)">Çizim Düzenle</span><span class="t" style="left:14.4px;top:112.54px;font-size:12px;font-weight:400;color:#1a1a1a;transform:scaleX(0.9683)">Ayarlar</span><span class="t" style="left:58.5px;top:112.54px;font-size:12px;font-weight:400;color:#1a1a1a;transform:scaleX(0.9790)">Numaralandırma</span><span class="t" style="left:88.5px;top:126.34px;font-size:12px;font-weight:400;color:#1a1a1a;transform:scaleX(0.9038)">Yap</span><span class="t" style="left:154.3px;top:112.54px;font-size:12px;font-weight:400;color:#1a1a1a;transform:scaleX(0.9717)">Çizimleri</span><span class="t" style="left:170.2px;top:126.34px;font-size:12px;font-weight:400;color:#1a1a1a;transform:scaleX(0.8768)">Sil</span><span class="t" style="left:210.2px;top:112.54px;font-size:12px;font-weight:400;color:#1a1a1a;transform:scaleX(0.9739)">Çizimleri</span><span class="t" style="left:206.7px;top:126.34px;font-size:12px;font-weight:400;color:#1a1a1a;transform:scaleX(0.9592)">Dışa Aktar</span><span class="t" style="left:273.7px;top:112.54px;font-size:12px;font-weight:400;color:#1a1a1a;transform:scaleX(0.9098)">Parçaları</span><span class="t" style="left:278.5px;top:126.34px;font-size:12px;font-weight:400;color:#1a1a1a;transform:scaleX(0.9468)">Göster</span><span class="t" style="left:325.8px;top:112.54px;font-size:12px;font-weight:400;color:#1a1a1a;transform:scaleX(1.0002)">Montajları</span><span class="t" style="left:335.6px;top:126.34px;font-size:12px;font-weight:400;color:#1a1a1a;transform:scaleX(0.9496)">Göster</span><span class="t" style="left:386.4px;top:112.54px;font-size:12px;font-weight:400;color:#1a1a1a;transform:scaleX(0.9894)">Malzemeleri</span><span class="t" style="left:400.2px;top:126.34px;font-size:12px;font-weight:400;color:#1a1a1a;transform:scaleX(0.9524)">Göster</span><span class="t" style="left:484.0px;top:112.54px;font-size:12px;font-weight:400;color:#1a1a1a;transform:scaleX(0.9428)">Genel</span><span class="t" style="left:477.0px;top:126.34px;font-size:12px;font-weight:400;color:#1a1a1a;transform:scaleX(0.9478)">Yerleşim</span><span class="t" style="left:554.6px;top:112.54px;font-size:12px;font-weight:400;color:#1a1a1a;transform:scaleX(0.8865)">Parça</span><span class="t" style="left:548.5px;top:126.34px;font-size:12px;font-weight:400;color:#1a1a1a;transform:scaleX(1.0162)">Çizimi</span><span class="t" style="left:599.6px;top:112.54px;font-size:12px;font-weight:400;color:#1a1a1a;transform:scaleX(1.0186)">Montaj</span><span class="t" style="left:597.4px;top:126.34px;font-size:12px;font-weight:400;color:#1a1a1a;transform:scaleX(0.9549)">Çizimi</span><span class="t" style="left:646.4px;top:112.54px;font-size:12px;font-weight:400;color:#1a1a1a;transform:scaleX(0.9561)">Birleşim</span><span class="t" style="left:646.4px;top:126.34px;font-size:12px;font-weight:400;color:#1a1a1a;transform:scaleX(0.9672)">Çizimi</span><span class="t" style="left:722.9px;top:112.54px;font-size:12px;font-weight:400;color:#1a1a1a;transform:scaleX(0.9393)">Makas</span><span class="t" style="left:790.4px;top:112.54px;font-size:12px;font-weight:400;color:#1a1a1a;transform:scaleX(0.9921)">Temeller</span><span class="t" style="left:854.8px;top:112.54px;font-size:12px;font-weight:400;color:#1a1a1a;transform:scaleX(0.9620)">Temel</span><span class="t" style="left:842.4px;top:126.34px;font-size:12px;font-weight:400;color:#1a1a1a;transform:scaleX(0.9788)">Aplikasyon</span><span class="t" style="left:922.7px;top:112.54px;font-size:12px;font-weight:400;color:#1a1a1a;transform:scaleX(0.8958)">Hızlı</span><span class="t" style="left:912.7px;top:126.34px;font-size:12px;font-weight:400;color:#1a1a1a;transform:scaleX(1.0077)">Metraj</span><span class="t" style="left:963.6px;top:112.54px;font-size:12px;font-weight:400;color:#1a1a1a;transform:scaleX(0.9537)">Raporlar</span><span class="t" style="left:44.5px;top:190.64px;font-size:12px;font-weight:400;color:#1a1a1a;transform:scaleX(0.9119)">3D Bakış</span><span class="t" style="left:175.5px;top:190.64px;font-size:12px;font-weight:400;color:#1a1a1a;transform:scaleX(1.0500)">M</span>
<div class="a" style="left:180px;top:139.4px;width:900px;height:799.6px;background:#f9f9f9;border:1px solid #b3b3b3;border-radius:4.5px;box-sizing:border-box"></div>
<div class="a" style="left:186.2px;top:204.8px;width:300px;height:728px;background:#fff;border:1px solid #d0d0d0;box-sizing:border-box"></div>
<div class="a" style="left:187px;top:228.1px;width:298.5px;height:1px;background:#d4d4d4"></div>
<div class="a" style="left:187px;top:253.1px;width:298.5px;height:23.6px;background:#cce4f7"></div>
<div class="a" style="left:581.8px;top:209.9px;width:18.2px;height:17.8px;background:#0a5fbf;border-radius:3px"></div>
<svg class="a" style="left:0;top:0" width="1732" height="978" viewBox="0 0 1732 978">
<path d="M1051,151 L1061,161 M1061,151 L1051,161" stroke="#222" stroke-width="1.1"/>
<line x1="559.7" y1="177.3" x2="559.7" y2="199.5" stroke="#d2d2d2" stroke-width="1"/>
<path d="M192.3,180.2 H195.2 V187.2 H204.3 V180.2 H207.4 V195.5 H192.3 Z M195.2,189.3 V192.6 H204.3 V189.3 Z" fill="#333" fill-rule="evenodd"/><rect x="196.1" y="180.7" width="6.4" height="4.1" fill="#333"/><rect x="197" y="181.5" width="2.2" height="2.4" fill="#e8e8e8"/>
<path d="M257.3,180.2 H260.2 V187.2 H265.8 V189.3 H260.2 V192.6 H269 V191 H271.9 V195.5 H257.3 Z" fill="#333"/><rect x="261" y="180.9" width="4.6" height="3.9" fill="#333"/><rect x="261.8" y="181.7" width="1.8" height="2.3" fill="#e8e8e8"/><rect x="268.5" y="178.9" width="6.6" height="9.1" rx="0.8" fill="#fff" stroke="#333" stroke-width="1.5"/>
<path d="M354,181.8 H359.6 L360.6,183.9 H364.6 L366.9,186.5 H358.7 L354,193.6 Z" fill="#edac62"/><path d="M359.4,188 H372 L368.8,193.9 H356 Z" fill="#e8922c"/><path d="M363,182.2 C364.5,179.2 368.6,178.6 369.8,182.6" fill="none" stroke="#2f9e47" stroke-width="1.9"/><path d="M365.6,183 H373 L369.5,186.8 Z" fill="#2f9e47"/>
<path d="M460.06,189.37 A6.1,6.1 0 1,0 461.33,184.08" fill="none" stroke="#3aa84a" stroke-width="2.1"/><path d="M457.8,180.4 L465,181.6 L458.8,187.8 Z" fill="#3aa84a"/>
<circle cx="573.4" cy="183.4" r="5.2" fill="#3aa84a"/><path d="M570.5,183.4 H576.3 M573.4,180.5 V186.3" stroke="#fff" stroke-width="1.6"/><circle cx="581.2" cy="190.9" r="6.2" fill="#1f86dc" stroke="#f9f9f9" stroke-width="1"/><path d="M578.2,190.9 H584.2" stroke="#fff" stroke-width="1.7"/>
<circle cx="197.2" cy="216.6" r="4.4" fill="none" stroke="#777" stroke-width="1.2"/><line x1="200.4" y1="219.8" x2="203.8" y2="223.2" stroke="#777" stroke-width="1.3"/>
<path d="M465,215 L469.5,220.2 L474,215" fill="none" stroke="#666" stroke-width="1"/>
<path d="M586.2,218.4 L589.4,221.6 L594.7,215.3" fill="none" stroke="#fff" stroke-width="1.2"/>
<path d="M200,237.2 L200,243.7 L193,243.7 Z" fill="#111"/>
<path d="M220.2,309.2 L220.2,315.7 L213.2,315.7 Z" fill="#111"/>
<path d="M241.99,311.40 L244.00,311.98 L244.00,314.42 L241.99,315.00 L241.77,315.53 L242.78,317.36 L241.06,319.08 L239.23,318.07 L238.70,318.29 L238.12,320.30 L235.68,320.30 L235.10,318.29 L234.57,318.07 L232.74,319.08 L231.02,317.36 L232.03,315.53 L231.81,315.00 L229.80,314.42 L229.80,311.98 L231.81,311.40 L232.03,310.87 L231.02,309.04 L232.74,307.32 L234.57,308.33 L235.10,308.11 L235.68,306.10 L238.12,306.10 L238.70,308.11 L239.23,308.33 L241.06,307.32 L242.78,309.04 L241.77,310.87Z M239.10,313.20 A2.2,2.2 0 1,0 234.70,313.20 A2.2,2.2 0 1,0 239.10,313.20Z" fill="#0a74d6" fill-rule="evenodd" transform="rotate(-90 236.9 313.2)"/>
<path d="M220.2,429.2 L220.2,435.7 L213.2,435.7 Z" fill="#111"/>
<path d="M241.99,431.40 L244.00,431.98 L244.00,434.42 L241.99,435.00 L241.77,435.53 L242.78,437.36 L241.06,439.08 L239.23,438.07 L238.70,438.29 L238.12,440.30 L235.68,440.30 L235.10,438.29 L234.57,438.07 L232.74,439.08 L231.02,437.36 L232.03,435.53 L231.81,435.00 L229.80,434.42 L229.80,431.98 L231.81,431.40 L232.03,430.87 L231.02,429.04 L232.74,427.32 L234.57,428.33 L235.10,428.11 L235.68,426.10 L238.12,426.10 L238.70,428.11 L239.23,428.33 L241.06,427.32 L242.78,429.04 L241.77,430.87Z M239.10,433.20 A2.2,2.2 0 1,0 234.70,433.20 A2.2,2.2 0 1,0 239.10,433.20Z" fill="#0a74d6" fill-rule="evenodd" transform="rotate(-90 236.9 433.2)"/>
<path d="M220.2,501.2 L220.2,507.7 L213.2,507.7 Z" fill="#111"/>
<path d="M241.99,503.40 L244.00,503.98 L244.00,506.42 L241.99,507.00 L241.77,507.53 L242.78,509.36 L241.06,511.08 L239.23,510.07 L238.70,510.29 L238.12,512.30 L235.68,512.30 L235.10,510.29 L234.57,510.07 L232.74,511.08 L231.02,509.36 L232.03,507.53 L231.81,507.00 L229.80,506.42 L229.80,503.98 L231.81,503.40 L232.03,502.87 L231.02,501.04 L232.74,499.32 L234.57,500.33 L235.10,500.11 L235.68,498.10 L238.12,498.10 L238.70,500.11 L239.23,500.33 L241.06,499.32 L242.78,501.04 L241.77,502.87Z M239.10,505.20 A2.2,2.2 0 1,0 234.70,505.20 A2.2,2.2 0 1,0 239.10,505.20Z" fill="#0a74d6" fill-rule="evenodd" transform="rotate(-90 236.9 505.2)"/>
<path d="M234,405.1 L240.6,409.1 L234,413.1 Z" fill="#111"/>
<path d="M249.1,409.0 L259.3,403.0 Q256.2,409.0 259.3,415.0 Z" fill="#6a6a6a"/><ellipse cx="256.3" cy="409.2" rx="1.6" ry="2.7" fill="#fff"/><path d="M260,406.6 L264.8,404.8 M260,409.1 H264.8 M260,411.6 L264.8,413.4" fill="none" stroke="#1a78d6" stroke-width="1.5" stroke-linecap="round"/>
<path d="M234,477.1 L240.6,481.1 L234,485.1 Z" fill="#111"/>
<path d="M249.1,481.0 L259.3,475.0 Q256.2,481.0 259.3,487.0 Z" fill="#6a6a6a"/><ellipse cx="256.3" cy="481.2" rx="1.6" ry="2.7" fill="#fff"/><path d="M260,478.6 L264.8,476.8 M260,481.1 H264.8 M260,483.6 L264.8,485.4" fill="none" stroke="#1a78d6" stroke-width="1.5" stroke-linecap="round"/>
<path d="M234,549.1 L240.6,553.1 L234,557.1 Z" fill="#111"/>
<path d="M249.1,553.0 L259.3,547.0 Q256.2,553.0 259.3,559.0 Z" fill="#6a6a6a"/><ellipse cx="256.3" cy="553.2" rx="1.6" ry="2.7" fill="#fff"/><path d="M260,550.6 L264.8,548.8 M260,553.1 H264.8 M260,555.6 L264.8,557.4" fill="none" stroke="#1a78d6" stroke-width="1.5" stroke-linecap="round"/>
<path d="M230.2,290.6 L237,283.8 L239,285.8 L232.2,292.6 L229.8,293.2 Z" fill="#0a74d6"/><path d="M237.8,283 L239,281.8 L241,283.8 L239.8,285 Z" fill="#0a74d6"/><rect x="229.7" y="293.9" width="14.6" height="2.5" fill="none" stroke="#c8c8c8" stroke-width="1"/>
</svg>
<span class="t" style="left:186.0px;top:150.84px;font-size:12px;font-weight:400;color:#1a1a1a;transform:scaleX(0.9803)">Çizim Ayar</span><span class="t" style="left:213.7px;top:182.54px;font-size:12px;font-weight:400;color:#1a1a1a;transform:scaleX(0.9449)">Kaydet</span><span class="t" style="left:279.5px;top:182.54px;font-size:12px;font-weight:400;color:#1a1a1a;transform:scaleX(0.9406)">Farklı Kaydet</span><span class="t" style="left:376.0px;top:182.54px;font-size:12px;font-weight:400;color:#1a1a1a;transform:scaleX(0.9774)">Ayar İçe Aktar</span><span class="t" style="left:479.5px;top:182.54px;font-size:12px;font-weight:400;color:#1a1a1a;transform:scaleX(0.9431)">Ayarları Sıfırla</span><span class="t" style="left:591.4px;top:182.54px;font-size:12px;font-weight:400;color:#1a1a1a;transform:scaleX(0.9954)">Hepsini Topla</span><span class="t" style="left:215.4px;top:211.44px;font-size:12px;font-weight:400;color:#8c8c8c;transform:scaleX(0.8990)">Ara</span><span class="t" style="left:496.0px;top:213.84px;font-size:12px;font-weight:400;color:#1a1a1a;transform:scaleX(0.9561)">Siyah Arka Plan</span><span class="t" style="left:232.9px;top:235.64px;font-size:12px;font-weight:400;color:#1a1a1a;transform:scaleX(0.9757)">Çizim Ayarları</span><span class="t" style="left:253.0px;top:259.64px;font-size:12px;font-weight:400;color:#1a1a1a;transform:scaleX(0.9738)">Genel Ayarlar</span><span class="t" style="left:253.0px;top:283.64px;font-size:12px;font-weight:400;color:#1a1a1a;transform:scaleX(0.9387)">Kalem Listesi</span><span class="t" style="left:253.0px;top:307.64px;font-size:12px;font-weight:400;color:#1a1a1a;transform:scaleX(0.9693)">Genel Yerleşim Çizim Ayarları</span><span class="t" style="left:273.0px;top:331.64px;font-size:12px;font-weight:400;color:#1a1a1a;transform:scaleX(0.9768)">Düzlem Yerleşim</span><span class="t" style="left:273.0px;top:355.64px;font-size:12px;font-weight:400;color:#1a1a1a;transform:scaleX(0.9580)">3D</span><span class="t" style="left:273.0px;top:379.64px;font-size:12px;font-weight:400;color:#1a1a1a;transform:scaleX(0.9816)">Ankraj Yerleşim</span><span class="t" style="left:273.0px;top:403.64px;font-size:12px;font-weight:400;color:#1a1a1a;transform:scaleX(0.9225)">Bakışlar</span><span class="t" style="left:253.0px;top:427.64px;font-size:12px;font-weight:400;color:#1a1a1a;transform:scaleX(0.9951)">Montaj Çizim Ayarları</span><span class="t" style="left:273.0px;top:451.64px;font-size:12px;font-weight:400;color:#1a1a1a;transform:scaleX(1.0352)">Montaj</span><span class="t" style="left:273.0px;top:475.64px;font-size:12px;font-weight:400;color:#1a1a1a;transform:scaleX(0.9225)">Bakışlar</span><span class="t" style="left:253.0px;top:499.64px;font-size:12px;font-weight:400;color:#1a1a1a;transform:scaleX(0.9577)">Parça Çizim Ayarları</span><span class="t" style="left:273.0px;top:523.64px;font-size:12px;font-weight:400;color:#1a1a1a;transform:scaleX(0.9088)">Parça</span><span class="t" style="left:273.0px;top:547.64px;font-size:12px;font-weight:400;color:#1a1a1a;transform:scaleX(0.9225)">Bakışlar</span>

<div class="a" style="left:0;top:62.8px;width:68.8px;height:99.4px;border:5px solid #ea1a22;box-sizing:border-box"></div>
<div class="a" style="left:486px;top:201px;width:139px;height:39px;border:5px solid #ea1a22;box-sizing:border-box"></div>
<div class="a" style="left:235px;top:254px;width:106px;height:25px;border:5px solid #ea1a22;box-sizing:border-box"></div>

</body></html>
